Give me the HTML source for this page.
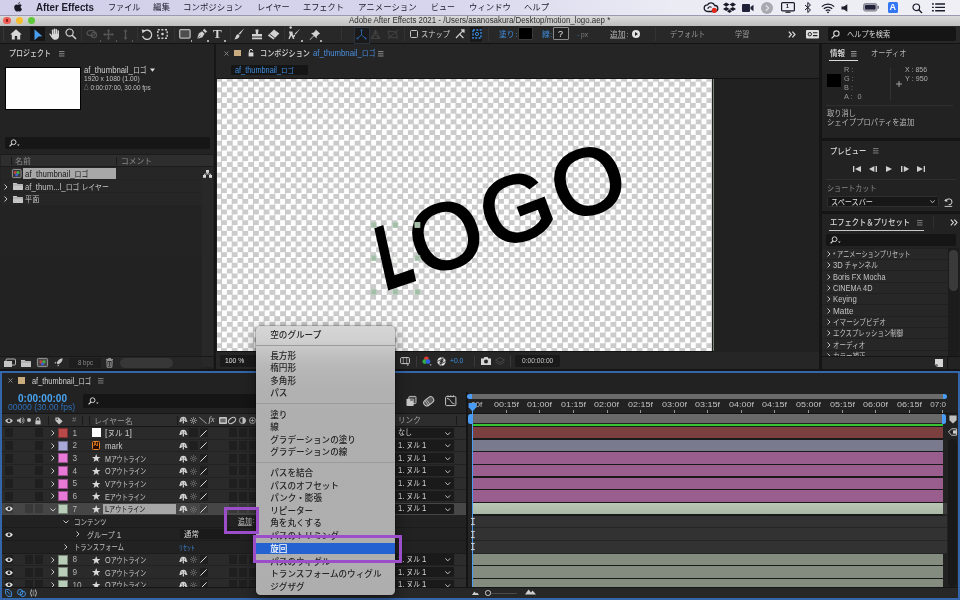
<!DOCTYPE html>
<html lang="ja"><head><meta charset="utf-8"><title>Adobe After Effects 2021 - motion_logo.aep</title>
<style>
html,body{margin:0;padding:0}
body{width:960px;height:600px;overflow:hidden;background:#232323;font-family:"Liberation Sans","Noto Sans CJK JP",sans-serif;color:#c8c8c8;font-size:8px;position:relative}
.a{position:absolute}
.t{position:absolute;white-space:nowrap;overflow:visible}
svg{overflow:visible}
</style></head><body><div id="app" style="position:absolute;left:0;top:0;width:960px;height:600px;overflow:hidden;will-change:transform;opacity:0.9999">

<div class="a" style="left:0;top:0;width:960px;height:15px;background:linear-gradient(90deg,#d2d0ea 0%,#d8d6ee 45%,#ececf5 70%,#f0f0f6 100%)"></div>
<svg class="a" style="left:13px;top:2px;" width="10" height="11" viewBox="0 0 10 11"><path d="M6.9 0.1c0.1 0.9-0.6 1.9-1.6 2.0c-0.1-0.9 0.7-1.9 1.6-2.0zM5.2 2.6c0.5 0 1.0-0.4 1.7-0.4c0.7 0 1.4 0.4 1.8 1.0c-1.6 0.9-1.3 3.2 0.3 3.8c-0.3 0.9-1.2 2.6-2.1 2.6c-0.6 0-0.9-0.4-1.6-0.4c-0.7 0-1.0 0.4-1.6 0.4c-1.0 0-2.5-2.3-2.5-4.2c0-1.9 1.2-2.9 2.4-2.9c0.7 0 1.2 0.4 1.6 0.4z" fill="#1a1a28"/></svg>
<div class="t" style="left:36px;top:2.00px;font-size:10px;height:11px;line-height:11px;color:#1c1c2a;font-weight:bold;transform:scaleX(0.975);transform-origin:0 50%">After Effects</div>
<div class="t" style="left:107.5px;top:3.35px;font-size:8.5px;height:9.5px;line-height:9.5px;color:#1c1c2a;;transform:scaleX(0.955);transform-origin:0 50%">ファイル</div>
<div class="t" style="left:153px;top:3.35px;font-size:8.5px;height:9.5px;line-height:9.5px;color:#1c1c2a;;transform:scaleX(0.999);transform-origin:0 50%">編集</div>
<div class="t" style="left:183.3px;top:3.35px;font-size:8.5px;height:9.5px;line-height:9.5px;color:#1c1c2a;;transform:scaleX(0.995);transform-origin:0 50%">コンポジション</div>
<div class="t" style="left:256.7px;top:3.35px;font-size:8.5px;height:9.5px;line-height:9.5px;color:#1c1c2a;;transform:scaleX(0.966);transform-origin:0 50%">レイヤー</div>
<div class="t" style="left:302.5px;top:3.35px;font-size:8.5px;height:9.5px;line-height:9.5px;color:#1c1c2a;;transform:scaleX(0.960);transform-origin:0 50%">エフェクト</div>
<div class="t" style="left:358px;top:3.35px;font-size:8.5px;height:9.5px;line-height:9.5px;color:#1c1c2a;;transform:scaleX(0.992);transform-origin:0 50%">アニメーション</div>
<div class="t" style="left:430.8px;top:3.35px;font-size:8.5px;height:9.5px;line-height:9.5px;color:#1c1c2a;;transform:scaleX(0.937);transform-origin:0 50%">ビュー</div>
<div class="t" style="left:469px;top:3.35px;font-size:8.5px;height:9.5px;line-height:9.5px;color:#1c1c2a;;transform:scaleX(0.988);transform-origin:0 50%">ウィンドウ</div>
<div class="t" style="left:523.7px;top:3.35px;font-size:8.5px;height:9.5px;line-height:9.5px;color:#1c1c2a;;transform:scaleX(0.980);transform-origin:0 50%">ヘルプ</div>
<svg class="a" style="left:703px;top:2px;" width="16" height="11" viewBox="0 0 16 11"><path d="M4.5 9.5a3.3 3.3 0 0 1 0-6.6a4 4 0 0 1 7.2 0.6a3 3 0 0 1 0.3 6z" fill="none" stroke="#1c1c2a" stroke-width="1.3"/><path d="M5 7a2 2 0 0 1 3.5-1.5" fill="none" stroke="#1c1c2a" stroke-width="1.1"/><circle cx="11.3" cy="8.3" r="2.6" fill="#e02a1c"/></svg>
<svg class="a" style="left:723px;top:2px;" width="13" height="11" viewBox="0 0 13 11"><path d="M3.2 0.5L6.5 2.6L3.2 4.7L0 2.6zM9.8 0.5L13 2.6L9.8 4.7L6.5 2.6zM3.2 4.9L6.5 7L3.2 9.1L0 7zM9.8 4.9L13 7L9.8 9.1L6.5 7zM6.5 7.6L9 9.3L6.5 11L4 9.3z" fill="#1c1c2a"/></svg>
<svg class="a" style="left:742px;top:3.5px;" width="12" height="8" viewBox="0 0 12 8"><rect x="0" y="0" width="8" height="8" rx="1" fill="#22223a"/><path d="M8.5 3L11.5 0.8V7.2L8.5 5z" fill="#22223a"/></svg>
<svg class="a" style="left:761px;top:1.5px;" width="12" height="12" viewBox="0 0 12 12"><circle cx="6" cy="6" r="6" fill="#a9a9b1"/><path d="M4.8 3.2L7.6 6L4.8 8.8" fill="none" stroke="#dcdce2" stroke-width="1.5"/></svg>
<svg class="a" style="left:781px;top:2px;" width="14" height="11" viewBox="0 0 14 11"><rect x="0.6" y="0.6" width="12.8" height="8.3" rx="1" fill="none" stroke="#1c1c2a" stroke-width="1.2"/><rect x="4.5" y="9.6" width="5" height="1.2" fill="#1c1c2a"/></svg>
<div class="t" style="left:785.8px;top:3.30px;font-size:6px;height:7px;line-height:7px;color:#1c1c2a;font-weight:bold;">1</div>
<svg class="a" style="left:804px;top:2px;" width="8" height="11" viewBox="0 0 8 11"><path d="M1 3L6.5 8L3.8 10.5V0.5L6.5 3L1 8" fill="none" stroke="#1c1c2a" stroke-width="1"/></svg>
<svg class="a" style="left:821px;top:2.5px;" width="14" height="10" viewBox="0 0 14 10"><path d="M0.8 3.6a9 9 0 0 1 12.4 0M2.8 5.8a6 6 0 0 1 8.4 0M4.8 7.9a3.2 3.2 0 0 1 4.4 0" fill="none" stroke="#1c1c2a" stroke-width="1.3"/><circle cx="7" cy="9.3" r="0.9" fill="#1c1c2a"/></svg>
<svg class="a" style="left:841px;top:3.5px;" width="8" height="8" viewBox="0 0 8 8"><path d="M0.5 2.6H3L6.3 0.2V7.8L3 5.4H0.5z" fill="#1c1c2a"/></svg>
<svg class="a" style="left:863px;top:3.2px;" width="16" height="8.6" viewBox="0 0 16 8.6"><rect x="0.5" y="0.5" width="13.5" height="7.6" rx="2" fill="#a0a0ac" stroke="#8a8a98" stroke-width="1"/><rect x="2" y="2" width="10.5" height="4.6" rx="1" fill="#22223a"/><rect x="14.6" y="2.8" width="1.3" height="3" rx="0.6" fill="#6a6a78"/></svg>
<div class="a" style="left:887.5px;top:2px;width:10.5px;height:10.5px;background:#3478f6;border-radius:1.5px"></div>
<div class="t" style="left:889.6px;top:2.30px;font-size:9px;height:10px;line-height:10px;color:#ffffff;font-weight:bold;">A</div>
<svg class="a" style="left:912px;top:2.5px;" width="11" height="11" viewBox="0 0 11 11"><circle cx="4.3" cy="4.3" r="3.3" fill="none" stroke="#1c1c2a" stroke-width="1.2"/><path d="M6.8 6.8L10 10" stroke="#1c1c2a" stroke-width="1.4"/></svg>
<svg class="a" style="left:932px;top:3.2px;" width="13" height="9" viewBox="0 0 13 9"><path d="M3.2 1H13M3.2 4.4H13M3.2 7.8H13" stroke="#1c1c2a" stroke-width="1.4"/><path d="M0 1H1.8M0 4.4H1.8M0 7.8H1.8" stroke="#1c1c2a" stroke-width="1.4"/></svg>
<div class="a" style="left:0;top:14.7px;width:960px;height:11px;background:linear-gradient(180deg,#dcdcdc,#bdbdbd);border-top:0.7px solid #9c9ab0"></div>
<div class="a" style="left:3.3000000000000003px;top:16.7px;width:7.8px;height:7.8px;background:#ee5f57;border-radius:50%"></div>
<div class="a" style="left:15.499999999999998px;top:16.7px;width:7.8px;height:7.8px;background:#f5bd30;border-radius:50%"></div>
<div class="a" style="left:27.6px;top:16.7px;width:7.8px;height:7.8px;background:#5fc93c;border-radius:50%"></div>
<div class="a" style="left:6.1px;top:19.4px;width:2.2px;height:2.2px;background:#8c1a10;border-radius:50%"></div>
<div class="t" style="left:348.7px;top:16.05px;font-size:8.3px;height:9.3px;line-height:9.3px;color:#2e2e2e;;transform:scaleX(0.951);transform-origin:0 50%">Adobe After Effects 2021 - /Users/asanosakura/Desktop/motion_logo.aep *</div>
<div class="a" style="left:0px;top:25.5px;width:960px;height:17.5px;background:#292929;"></div>
<div class="a" style="left:0px;top:43px;width:960px;height:1.3px;background:#141414;"></div>
<div class="a" style="left:0;top:-1px;width:960px;height:60px">
<div class="a" style="left:3px;top:28px;width:1px;height:14px;background:#3a3a3a;"></div>
<svg class="a" style="left:10px;top:29.5px;" width="12" height="11" viewBox="0 0 12 11"><path d="M6 0.3L0.2 5.4H1.8V10.6H4.8V7H7.2V10.6H10.2V5.4H11.8z" fill="#d8d8d8"/></svg>
<div class="a" style="left:30px;top:28.2px;width:14.5px;height:13.6px;background:#161616;"></div>
<svg class="a" style="left:33.5px;top:29.6px;" width="9" height="12" viewBox="0 0 9 12"><path d="M0.5 0.3L8.3 7.2L4.6 7.4L0.5 11.2z" fill="#4a9ff0"/></svg>
<svg class="a" style="left:48.5px;top:29px;" width="12" height="12" viewBox="0 0 12 12"><g fill="#d8d8d8"><rect x="2.9" y="1.6" width="1.55" height="6" rx="0.75"/><rect x="4.75" y="0.5" width="1.55" height="7" rx="0.75"/><rect x="6.6" y="1" width="1.55" height="6.5" rx="0.75"/><rect x="8.45" y="2.3" width="1.5" height="6" rx="0.75"/><path d="M2.9 5.8H9.95V8.2C9.95 10.4 8.6 11.8 6.4 11.8C4.6 11.8 3.7 11 2.6 9.4L0.5 6.6C0 5.8 1.1 5.1 1.7 5.9L2.9 7.4z"/></g></svg>
<svg class="a" style="left:65px;top:29px;" width="12" height="12" viewBox="0 0 12 12"><circle cx="4.6" cy="4.6" r="3.6" fill="none" stroke="#d2d2d2" stroke-width="1.2"/><path d="M7.2 7.2L11 11" stroke="#d2d2d2" stroke-width="1.6"/></svg>
<div class="a" style="left:80.5px;top:28px;width:0.7px;height:14px;background:#343434;"></div>
<svg class="a" style="left:86px;top:30px;" width="13" height="10" viewBox="0 0 13 10"><ellipse cx="5" cy="4" rx="4" ry="2.6" fill="none" stroke="#555" stroke-width="1.2"/><circle cx="8" cy="6" r="2.6" fill="none" stroke="#555" stroke-width="1.2"/></svg>
<svg class="a" style="left:103px;top:29.5px;" width="11" height="11" viewBox="0 0 11 11"><path d="M5.5 0L7.3 2.2H6.2V4.8H8.8V3.7L11 5.5L8.8 7.3V6.2H6.2V8.8H7.3L5.5 11L3.7 8.8H4.8V6.2H2.2V7.3L0 5.5L2.2 3.7V4.8H4.8V2.2H3.7z" fill="#555"/></svg>
<svg class="a" style="left:121.5px;top:29.5px;" width="7" height="11" viewBox="0 0 7 11"><path d="M3.5 0L5.6 2.6H4.2V8.4H5.6L3.5 11L1.4 8.4H2.8V2.6H1.4z" fill="#555"/></svg>
<div class="a" style="left:99.5px;top:41px;width:1.5px;height:1.5px;background:#555;"></div>
<div class="a" style="left:115.5px;top:41px;width:1.5px;height:1.5px;background:#555;"></div>
<div class="a" style="left:131.5px;top:41px;width:1.5px;height:1.5px;background:#555;"></div>
<div class="a" style="left:136.5px;top:28px;width:0.7px;height:14px;background:#343434;"></div>
<svg class="a" style="left:141px;top:29.5px;" width="12" height="11" viewBox="0 0 12 11"><path d="M3.2 2.2A4.6 4.6 0 1 1 1.6 6.8" fill="none" stroke="#d2d2d2" stroke-width="1.3"/><path d="M0.6 0.4L4.8 1.2L1.6 4.4z" fill="#d2d2d2"/></svg>
<svg class="a" style="left:157px;top:30px;" width="11" height="10" viewBox="0 0 11 10"><rect x="0.8" y="0.8" width="9.4" height="8.4" fill="none" stroke="#d2d2d2" stroke-width="1.4" stroke-dasharray="2 1.6"/><circle cx="5.5" cy="5" r="1.3" fill="#d2d2d2"/></svg>
<div class="a" style="left:173.5px;top:28px;width:0.7px;height:14px;background:#343434;"></div>
<svg class="a" style="left:179px;top:29.5px;" width="12" height="10" viewBox="0 0 12 10"><rect x="0.7" y="0.7" width="10.4" height="8.4" rx="1" fill="#4e4e4e" stroke="#b8b8b8" stroke-width="1.3"/></svg>
<div class="a" style="left:190.5px;top:41px;width:1.5px;height:1.5px;background:#aaa;"></div>
<svg class="a" style="left:196px;top:29px;" width="12" height="12" viewBox="0 0 12 12"><path d="M8.2 0.4L11.4 3.6L9.4 5.2L6.6 2.4zM6 3L8.8 5.8L6.4 9.6L1 11L2.4 5.6zM2.2 9.8L4.6 7.4" fill="#d2d2d2" stroke="#292929" stroke-width="0.5"/></svg>
<div class="a" style="left:207px;top:41px;width:1.5px;height:1.5px;background:#aaa;"></div>
<div class="t" style="left:213px;top:28.20px;font-size:13px;height:14px;line-height:14px;color:#d8d8d8;font-family:&quot;Liberation Serif&quot;,serif;font-weight:bold;">T</div>
<div class="a" style="left:224px;top:41px;width:1.5px;height:1.5px;background:#aaa;"></div>
<div class="a" style="left:229.5px;top:28px;width:0.7px;height:14px;background:#343434;"></div>
<svg class="a" style="left:234px;top:29px;" width="11" height="12" viewBox="0 0 11 12"><path d="M10.4 0.3L6 6.6L4.6 5.4zM4 6L5.6 7.4C5.4 9.6 3.6 11 0.4 11.4C1.8 10 1.6 7 4 6z" fill="#d2d2d2"/></svg>
<svg class="a" style="left:250.5px;top:29.5px;" width="12" height="11" viewBox="0 0 12 11"><path d="M4.4 0.4H7.6L7 5H11V7.6H1V5H5zM1 8.6H11V10.2H1z" fill="#d2d2d2"/></svg>
<svg class="a" style="left:266.5px;top:29.5px;" width="13" height="11" viewBox="0 0 13 11"><path d="M7 0.4L12.4 4.4L6.4 10.6L0.8 6.4z" fill="#d2d2d2"/><path d="M2.6 5L7.8 9" stroke="#292929" stroke-width="0.9"/></svg>
<div class="a" style="left:284px;top:28px;width:0.7px;height:14px;background:#343434;"></div>
<svg class="a" style="left:288px;top:29px;" width="13" height="12" viewBox="0 0 13 12"><path d="M2.6 0.8a1.3 1.3 0 1 1 0.1 0zM1 3.6H4.4L5 7L6.4 11H5L3.4 7.6L1.6 11H0.4L1.8 7zM12.4 0.6L7.6 6.6L6.6 5.8zM6.2 6.4L7.2 7.2C7 8.6 6 9.4 4.6 9.6C5.4 8.8 5.2 7 6.2 6.4z" fill="#d2d2d2"/></svg>
<div class="a" style="left:301px;top:41px;width:1.5px;height:1.5px;background:#aaa;"></div>
<svg class="a" style="left:308.5px;top:29.5px;" width="12" height="12" viewBox="0 0 12 12"><path d="M6.8 0.4L11.2 4.8L9.8 5.2L7.8 7.2L7.6 9.6L5 7L1 11L0.6 10.6L4.6 6.6L2 4L4.4 3.8L6.4 1.8z" fill="#d2d2d2"/></svg>
<div class="a" style="left:320px;top:41px;width:1.5px;height:1.5px;background:#aaa;"></div>
<div class="a" style="left:340.5px;top:28px;width:0.7px;height:14px;background:#343434;"></div>
<div class="a" style="left:354px;top:27.5px;width:14px;height:15px;background:#1b1b1b;border:0.6px solid #2a3340"></div>
<svg class="a" style="left:355.5px;top:29.5px;" width="11" height="11" viewBox="0 0 11 11"><path d="M5.5 1.2V6L1.4 9.4M5.5 6L9.6 9.4" fill="none" stroke="#2b62a6" stroke-width="1"/><circle cx="5.5" cy="1.2" r="1" fill="#2b62a6"/><circle cx="1.4" cy="9.4" r="1" fill="#2b62a6"/><circle cx="9.6" cy="9.4" r="1" fill="#2b62a6"/></svg>
<svg class="a" style="left:370px;top:29.5px;" width="11" height="11" viewBox="0 0 11 11"><path d="M5.5 1.2L1.4 9.4H9.6zM5.5 1.2V6L1.4 9.4M5.5 6L9.6 9.4" fill="none" stroke="#474747" stroke-width="0.9"/></svg>
<svg class="a" style="left:386.5px;top:29.5px;" width="12" height="11" viewBox="0 0 12 11"><path d="M1 2L9 3L10.4 9L2.4 8zM1 9.6L11 1" fill="none" stroke="#474747" stroke-width="0.9"/></svg>
<div class="a" style="left:404px;top:28px;width:0.7px;height:14px;background:#343434;"></div>
<div class="a" style="left:409.5px;top:30.5px;width:8.5px;height:8.5px;background:transparent;border:1.2px solid #c4c4c4;border-radius:1.5px;box-sizing:border-box"></div>
<div class="t" style="left:420.8px;top:31.10px;font-size:8px;height:9px;line-height:9px;color:#d0d0d0;;transform:scaleX(0.903);transform-origin:0 50%">スナップ</div>
<svg class="a" style="left:455px;top:30px;" width="10" height="10" viewBox="0 0 10 10"><path d="M1 9L4.6 5.2L8.4 9M4.6 5.2L9 0.8M6 0.8H9V3.8" fill="none" stroke="#d2d2d2" stroke-width="1.2"/></svg>
<div class="a" style="left:470px;top:27.5px;width:12px;height:15px;background:#1b1b1b;"></div>
<svg class="a" style="left:471.5px;top:30px;" width="10" height="10" viewBox="0 0 10 10"><rect x="1" y="1" width="8" height="8" fill="none" stroke="#3b8be0" stroke-width="1.5" stroke-dasharray="2 1.3"/><circle cx="5" cy="5" r="1.6" fill="none" stroke="#3b8be0" stroke-width="1"/></svg>
<div class="a" style="left:488px;top:28px;width:0.7px;height:14px;background:#343434;"></div>
<div class="t" style="left:499px;top:31.10px;font-size:8px;height:9px;line-height:9px;color:#3f8fe0;;transform:scaleX(0.969);transform-origin:0 50%">塗り</div>
<div class="t" style="left:515.5px;top:30.50px;font-size:8px;height:9px;line-height:9px;color:#3f8fe0;;">:</div>
<div class="a" style="left:517.5px;top:28.2px;width:15.5px;height:13px;background:#000;border:0.8px solid #3c3c3c;box-sizing:border-box;border-radius:1px"></div>
<div class="t" style="left:541.5px;top:31.10px;font-size:8px;height:9px;line-height:9px;color:#3f8fe0;;transform:scaleX(0.975);transform-origin:0 50%">線</div>
<div class="t" style="left:550px;top:30.50px;font-size:8px;height:9px;line-height:9px;color:#3f8fe0;;">:</div>
<div class="a" style="left:552.5px;top:28.2px;width:16px;height:13px;background:#202020;border:1.2px solid #8a8a8a;box-sizing:border-box;border-radius:1px"></div>
<div class="t" style="left:558px;top:30.00px;font-size:9px;height:10px;line-height:10px;color:#e8e8e8;;">?</div>
<div class="t" style="left:577px;top:30.80px;font-size:8px;height:9px;line-height:9px;color:#808080;;transform:scaleX(0.824);transform-origin:0 50%"><span style="color:#3f7fc8">-</span> px</div>
<div class="t" style="left:610px;top:31.10px;font-size:8px;height:9px;line-height:9px;color:#b4b4b4;text-decoration:underline;text-decoration-color:#6a6a6a;text-decoration-thickness:0.6px;transform:scaleX(0.969);transform-origin:0 50%">追加</div>
<div class="t" style="left:626.5px;top:30.50px;font-size:8px;height:9px;line-height:9px;color:#b8b8b8;;">:</div>
<svg class="a" style="left:632px;top:31px;" width="8" height="8" viewBox="0 0 8 8"><circle cx="4" cy="4" r="4" fill="#e4e4e4"/><path d="M3 2L6 4L3 6z" fill="#222"/></svg>
<div class="a" style="left:654.5px;top:28px;width:0.7px;height:14px;background:#343434;"></div>
<div class="t" style="left:669.7px;top:31.30px;font-size:8px;height:9px;line-height:9px;color:#9a9a9a;;transform:scaleX(0.882);transform-origin:0 50%">デフォルト</div>
<div class="t" style="left:735px;top:31.30px;font-size:8px;height:9px;line-height:9px;color:#9a9a9a;;transform:scaleX(0.894);transform-origin:0 50%">学習</div>
<svg class="a" style="left:788px;top:31.5px;" width="8" height="7" viewBox="0 0 8 7"><path d="M0.8 0.6L3.4 3.5L0.8 6.4M4.4 0.6L7 3.5L4.4 6.4" fill="none" stroke="#e0e0e0" stroke-width="1.2"/></svg>
<svg class="a" style="left:806px;top:31px;" width="13" height="8.5" viewBox="0 0 13 8.5"><rect x="0" y="0" width="13" height="8.5" rx="1" fill="#e0e0e0"/><circle cx="3.8" cy="4.2" r="1.7" fill="none" stroke="#222" stroke-width="1"/><path d="M7 2.8H11.4M7 5.6H11.4" stroke="#222" stroke-width="1.1"/></svg>
<div class="a" style="left:827.5px;top:28.2px;width:128px;height:14px;background:#161616;border-radius:2px"></div>
<svg class="a" style="left:831px;top:30.5px;" width="9" height="9" viewBox="0 0 9 9"><circle cx="5.4" cy="3.6" r="2.7" fill="none" stroke="#d2d2d2" stroke-width="1.1"/><path d="M3.4 5.6L0.6 8.4" stroke="#d2d2d2" stroke-width="1.3"/></svg>
<div class="t" style="left:846.7px;top:31.30px;font-size:8px;height:9px;line-height:9px;color:#d8d8d8;;transform:scaleX(0.902);transform-origin:0 50%">ヘルプを検索</div>
</div>
<div class="a" style="left:0px;top:44.3px;width:960px;height:327px;background:#232323;"></div>
<div class="a" style="left:213.8px;top:44px;width:2.5px;height:325px;background:#161616;"></div>
<div class="a" style="left:819.3px;top:44px;width:2.8px;height:325px;background:#161616;"></div>
<div class="a" style="left:822px;top:138px;width:138px;height:2.8px;background:#161616;"></div>
<div class="a" style="left:822px;top:211px;width:138px;height:2.8px;background:#161616;"></div>
<div class="a" style="left:0px;top:368.6px;width:960px;height:3px;background:#161616;"></div>
<div class="t" style="left:9px;top:48.85px;font-size:8.5px;height:9.5px;line-height:9.5px;color:#d4d4d4;font-weight:500;transform:scaleX(0.823);transform-origin:0 50%">プロジェクト</div>
<svg class="a" style="left:59px;top:50.5px;" width="5.5" height="5.6" viewBox="0 0 5.5 5.6"><path d="M0 0.6H5.5M0 2.8H5.5M0 5H5.5" stroke="#9a9a9a" stroke-width="0.9"/></svg>
<div class="a" style="left:4.6px;top:66.8px;width:76px;height:43.2px;background:#ffffff;border:0.8px solid #000;box-sizing:border-box"></div>
<div class="t" style="left:84px;top:66.10px;font-size:8px;height:9px;line-height:9px;color:#d0d0d0;;transform:scaleX(0.862);transform-origin:0 50%"><span style="font-size:1.13em;line-height:1px">af_thumbnail_</span>ロゴ</div>
<svg class="a" style="left:149.5px;top:68px;" width="5" height="4" viewBox="0 0 5 4"><path d="M0 0.4H5L2.5 3.8z" fill="#e0e0e0"/></svg>
<div class="t" style="left:84px;top:74.85px;font-size:7.3px;height:8.3px;line-height:8.3px;color:#c0c0c0;;transform:scaleX(0.909);transform-origin:0 50%">1920 x 1080 (1.00)</div>
<div class="t" style="left:84px;top:83.85px;font-size:7.3px;height:8.3px;line-height:8.3px;color:#c0c0c0;;transform:scaleX(0.881);transform-origin:0 50%"><span style="font-size:0.72em;position:relative;top:-0.5px">△</span> 0:00:07:00, 30.00 fps</div>
<div class="a" style="left:5px;top:137.3px;width:204.5px;height:11.7px;background:#161616;border-radius:2px"></div>
<svg class="a" style="left:8.5px;top:139.3px;" width="11" height="8" viewBox="0 0 11 8"><circle cx="4.6" cy="3.2" r="2.4" fill="none" stroke="#d2d2d2" stroke-width="1"/><path d="M2.9 5L0.6 7.4" stroke="#d2d2d2" stroke-width="1.2"/><path d="M8 5.4H10.6L9.3 7z" fill="#d2d2d2"/></svg>
<div class="a" style="left:0px;top:154.3px;width:213.3px;height:1px;background:#1b1b1b;"></div>
<div class="a" style="left:1px;top:155.3px;width:212.3px;height:11px;background:#2f2f2f;"></div>
<div class="a" style="left:0px;top:166.3px;width:213.3px;height:1px;background:#1b1b1b;"></div>
<div class="a" style="left:10.5px;top:157px;width:0.9px;height:8px;background:#1a1a1a;"></div>
<div class="a" style="left:116px;top:157px;width:0.9px;height:8px;background:#1a1a1a;"></div>
<div class="t" style="left:15px;top:157.10px;font-size:8px;height:9px;line-height:9px;color:#8c8c8c;;transform:scaleX(1.000);transform-origin:0 50%">名前</div>
<div class="t" style="left:121px;top:157.10px;font-size:8px;height:9px;line-height:9px;color:#8c8c8c;;transform:scaleX(0.969);transform-origin:0 50%">コメント</div>
<div class="a" style="left:1px;top:167.3px;width:200.5px;height:11.9px;background:#272727;"></div>
<div class="a" style="left:1px;top:179.967px;width:200.5px;height:11.9px;background:#272727;"></div>
<div class="a" style="left:1px;top:192.63400000000001px;width:200.5px;height:11.9px;background:#272727;"></div>
<div class="a" style="left:201.5px;top:167.3px;width:11.8px;height:200px;background:#292929;"></div>
<svg class="a" style="left:12px;top:168.8px;" width="9.5" height="9" viewBox="0 0 9.5 9"><rect x="0.4" y="0.4" width="8.7" height="8.2" rx="1" fill="#3a3a3a" stroke="#b0b0b0" stroke-width="0.8"/><circle cx="3.4" cy="3.6" r="1.6" fill="#d04040"/><circle cx="6" cy="3.6" r="1.6" fill="#40b040"/><circle cx="4.7" cy="5.8" r="1.6" fill="#4060d0"/></svg>
<div class="a" style="left:23.3px;top:167.6px;width:92.7px;height:11.6px;background:#a9a9a9;"></div>
<div class="t" style="left:24.5px;top:169.70px;font-size:8px;height:9px;line-height:9px;color:#1a1a1a;;transform:scaleX(0.873);transform-origin:0 50%"><span style="font-size:1.13em;line-height:1px">af_thumbnail_</span>ロゴ</div>
<svg class="a" style="left:203px;top:169.5px;" width="9" height="8" viewBox="0 0 9 8"><rect x="3" y="0" width="3" height="2.8" fill="#d8d8d8"/><rect x="0" y="5" width="3" height="2.8" fill="#d8d8d8"/><rect x="6" y="5" width="3" height="2.8" fill="#d8d8d8"/><path d="M4.5 2.8V4H1.5V5M4.5 4H7.5V5" fill="none" stroke="#d8d8d8" stroke-width="0.8"/></svg>
<svg class="a" style="left:3.5px;top:183.5px;" width="4" height="6" viewBox="0 0 4 6"><path d="M0.5 0.5L3 3L0.5 5.5" fill="none" stroke="#c8c8c8" stroke-width="1"/></svg>
<svg class="a" style="left:12.5px;top:182.3px;" width="10" height="8" viewBox="0 0 10 8"><path d="M0 1H3.6L4.6 2H10V8H0z" fill="#c6c6c6"/><path d="M0 3H10" stroke="#8a8a8a" stroke-width="0.6"/></svg>
<div class="t" style="left:24.5px;top:182.70px;font-size:8px;height:9px;line-height:9px;color:#c4c4c4;;transform:scaleX(0.862);transform-origin:0 50%"><span style="font-size:1.13em;line-height:1px">af_thum...l_</span>ロゴ レイヤー</div>
<svg class="a" style="left:3.5px;top:196.2px;" width="4" height="6" viewBox="0 0 4 6"><path d="M0.5 0.5L3 3L0.5 5.5" fill="none" stroke="#c8c8c8" stroke-width="1"/></svg>
<svg class="a" style="left:12.5px;top:195px;" width="10" height="8" viewBox="0 0 10 8"><path d="M0 1H3.6L4.6 2H10V8H0z" fill="#c6c6c6"/><path d="M0 3H10" stroke="#8a8a8a" stroke-width="0.6"/></svg>
<div class="t" style="left:24.5px;top:195.40px;font-size:8px;height:9px;line-height:9px;color:#c4c4c4;;transform:scaleX(0.894);transform-origin:0 50%">平面</div>
<div class="a" style="left:0px;top:355.8px;width:213.8px;height:1.2px;background:#191919;"></div>
<div class="a" style="left:0px;top:357px;width:201.5px;height:11.6px;background:#272727;"></div>
<svg class="a" style="left:3.5px;top:358.5px;" width="12" height="8" viewBox="0 0 12 8"><rect x="0" y="2" width="8" height="6" fill="#c6c6c6"/><rect x="2" y="0" width="9.5" height="6" rx="1" fill="none" stroke="#c6c6c6" stroke-width="0.9"/></svg>
<svg class="a" style="left:21px;top:358.5px;" width="10" height="8" viewBox="0 0 10 8"><path d="M0 1H3.6L4.6 2H10V8H0z" fill="#c6c6c6"/><path d="M0 3H10" stroke="#8a8a8a" stroke-width="0.6"/></svg>
<svg class="a" style="left:37px;top:358px;" width="11" height="9" viewBox="0 0 11 9"><rect x="0.4" y="0.4" width="10.2" height="8.2" rx="1" fill="#4a4a4a" stroke="#b0b0b0" stroke-width="0.8"/><circle cx="4" cy="3.8" r="1.6" fill="#d04040"/><circle cx="7" cy="3.8" r="1.6" fill="#40b040"/><circle cx="5.5" cy="6" r="1.6" fill="#4060d0"/></svg>
<svg class="a" style="left:54px;top:358px;" width="9" height="9" viewBox="0 0 9 9"><path d="M8.6 0.2C5.6 0.4 3.6 2.4 2.6 5L4 6.4C6.6 5.4 8.6 3.4 8.6 0.2zM2 5.4L0.4 5.2L1.8 3.6zM3.6 7L3.8 8.6L5.4 7.2zM0.4 8.6L2.2 6.8" fill="#c6c6c6"/></svg>
<div class="a" style="left:69px;top:357.5px;width:32px;height:10.5px;background:#1f1f1f;border-radius:1px"></div>
<div class="t" style="left:77.5px;top:358.85px;font-size:7.3px;height:8.3px;line-height:8.3px;color:#8a8a8a;;transform:scaleX(0.840);transform-origin:0 50%">8 bpc</div>
<svg class="a" style="left:106px;top:357.5px;" width="7" height="9.5" viewBox="0 0 7 9.5"><path d="M0 1.6H7M2.4 1.6V0.4H4.6V1.6M0.8 2.6H6.2L5.8 9.2H1.2z" fill="none" stroke="#a8a8a8" stroke-width="0.9"/><path d="M2.6 4V8M4.4 4V8" stroke="#a8a8a8" stroke-width="0.7"/></svg>
<div class="a" style="left:119.5px;top:357.5px;width:53px;height:10px;background:#383838;border-radius:5px"></div>
<div class="a" style="left:216.3px;top:44.3px;width:603px;height:33.3px;background:#262626;"></div>
<div class="a" style="left:216.3px;top:79px;width:603px;height:273px;background:#222222;"></div>
<svg class="a" style="left:223.5px;top:51px;" width="5" height="5" viewBox="0 0 5 5"><path d="M0.5 0.5L4.5 4.5M4.5 0.5L0.5 4.5" stroke="#9a9a9a" stroke-width="0.8"/></svg>
<div class="a" style="left:234.3px;top:49.5px;width:6.8px;height:6.8px;background:#c9ad80;"></div>
<svg class="a" style="left:248px;top:48.5px;" width="6" height="8" viewBox="0 0 6 8"><path d="M1.4 3.4V2a1.6 1.6 0 0 1 3.2 0" fill="none" stroke="#d8d8d8" stroke-width="1"/><rect x="0.6" y="3.4" width="4.8" height="4" fill="#d8d8d8"/></svg>
<div class="t" style="left:259.7px;top:48.85px;font-size:8.5px;height:9.5px;line-height:9.5px;color:#d8d8d8;font-weight:500;transform:scaleX(0.840);transform-origin:0 50%">コンポジション</div>
<div class="t" style="left:312.5px;top:49.60px;font-size:7.6px;height:8.6px;line-height:8.6px;color:#4a90e0;;transform:scaleX(0.905);transform-origin:0 50%"><span style="font-size:1.13em;line-height:1px">af_thumbnail_</span>ロゴ</div>
<svg class="a" style="left:378px;top:50.5px;" width="5.5" height="5.6" viewBox="0 0 5.5 5.6"><path d="M0 0.6H5.5M0 2.8H5.5M0 5H5.5" stroke="#9a9a9a" stroke-width="0.9"/></svg>
<div class="a" style="left:230.5px;top:65px;width:77.5px;height:10px;background:#161616;border-radius:1px"></div>
<div class="t" style="left:235px;top:66.60px;font-size:7.4px;height:8.4px;line-height:8.4px;color:#3f8fe0;;transform:scaleX(0.877);transform-origin:0 50%"><span style="font-size:1.13em;line-height:1px">af_thumbnail_</span>ロゴ</div>
<div class="a" style="left:216.2px;top:77.6px;width:603.1px;height:1.4px;background:#141414;"></div>
<div class="a" style="left:217px;top:79px;width:495.3px;height:271.6px;background-color:#fff;background-image:conic-gradient(#ccc 25%,#fff 0 50%,#ccc 0 75%,#fff 0);background-size:10.6667px 10.6667px;background-position:-0.8px 2.7px"></div>
<div class="a" style="left:713.2px;top:79px;width:1.3px;height:272px;background:#748472;"></div>
<div class="a" style="left:217px;top:350.6px;width:497px;height:1px;background:#141414;"></div>
<svg class="a" style="left:0;top:0" width="960" height="600" viewBox="0 0 960 600"><g font-family="Liberation Sans, sans-serif" font-size="92" fill="#000" stroke="#000" stroke-width="3" text-anchor="middle"><text transform="translate(387.2,290.4) rotate(-19) skewX(-6.5) translate(-1.7,-2.5) scale(0.69,1)" font-size="83.6" stroke-width="5.2" vector-effect="non-scaling-stroke" text-anchor="start">L</text><text transform="translate(446,236) rotate(-20.5)" y="31.6">O</text><text transform="translate(516.6,208.5) rotate(-20.5)" y="31.6">G</text><text transform="translate(587.9,181.7) rotate(-20.5)" y="31.6">O</text></g>
<rect x="371.2" y="222.4" width="5" height="5" fill="#a3bfa7" stroke="#b4cbb8" stroke-width="0.8"/>
<rect x="392.9" y="222.4" width="5" height="5" fill="#a3bfa7" stroke="#b4cbb8" stroke-width="0.8"/>
<rect x="414.9" y="222.4" width="5" height="5" fill="#a3bfa7" stroke="#b4cbb8" stroke-width="0.8"/>
<rect x="371.2" y="255.7" width="5" height="5" fill="#a3bfa7" stroke="#b4cbb8" stroke-width="0.8"/>
<rect x="414.9" y="255.7" width="5" height="5" fill="#a3bfa7" stroke="#b4cbb8" stroke-width="0.8"/>
<rect x="371.2" y="289.4" width="5" height="5" fill="#a3bfa7" stroke="#b4cbb8" stroke-width="0.8"/>
<rect x="392.9" y="289.4" width="5" height="5" fill="#a3bfa7" stroke="#b4cbb8" stroke-width="0.8"/>
<rect x="414.9" y="289.4" width="5" height="5" fill="#a3bfa7" stroke="#b4cbb8" stroke-width="0.8"/>
<g stroke="#dfe8df" stroke-width="0.8" fill="none"><path d="M392.6 258L395 255.4L397.6 258L395 260.6z"/><path d="M390.5 258H392.6M397.6 258H399.5M395 253.5V255.4M395 260.6V262.5"/></g>
</svg>
<div class="a" style="left:216.2px;top:352px;width:603.1px;height:16.6px;background:#272727;"></div>
<div class="a" style="left:220px;top:355.3px;width:36px;height:12.2px;background:#1b1b1b;border-radius:1px"></div>
<div class="t" style="left:224.5px;top:357.35px;font-size:7.3px;height:8.3px;line-height:8.3px;color:#e2e2e2;;transform:scaleX(0.932);transform-origin:0 50%">100 %</div>
<svg class="a" style="left:400px;top:356.7px;" width="10" height="9" viewBox="0 0 10 9"><rect x="0.6" y="0.6" width="8.8" height="6" rx="1" fill="none" stroke="#d0d0d0" stroke-width="1"/><path d="M3.3 0.6V6.6M6.7 0.6V6.6" stroke="#d0d0d0" stroke-width="0.6"/><path d="M6.6 7.6H9L7.8 9z" fill="#d0d0d0"/></svg>
<div class="a" style="left:416px;top:355.5px;width:0.7px;height:11px;background:#3a3a3a;"></div>
<svg class="a" style="left:422px;top:356.2px;" width="10" height="10" viewBox="0 0 10 10"><circle cx="4.4" cy="2.8" r="2.4" fill="#e03a30"/><circle cx="2.8" cy="5.6" r="2.4" fill="#2fb040"/><circle cx="6" cy="5.6" r="2.4" fill="#3060e0"/><path d="M7.4 8.4H9.8L8.6 9.8z" fill="#d0d0d0"/></svg>
<svg class="a" style="left:436.8px;top:357.0px;" width="9" height="9" viewBox="0 0 9 9"><circle cx="4.5" cy="4.5" r="4.2" fill="#e6e6e6"/><path d="M4.5 0.3L6.3 4.2M8.7 4.5L5.2 6.3M4.5 8.7L2.7 4.8M0.3 4.5L3.8 2.7M7.6 1.6L3.8 2.7M1.4 7.4L5.2 6.3" stroke="#272727" stroke-width="0.8" fill="none"/><circle cx="4.5" cy="4.5" r="1.4" fill="#272727"/></svg>
<div class="t" style="left:450px;top:357.25px;font-size:7.3px;height:8.3px;line-height:8.3px;color:#3f8fe0;;transform:scaleX(0.923);transform-origin:0 50%">+0.0</div>
<div class="a" style="left:473.5px;top:355.5px;width:0.7px;height:11px;background:#3a3a3a;"></div>
<svg class="a" style="left:480.5px;top:357.2px;" width="10" height="8" viewBox="0 0 10 8"><path d="M0 1.4H2.6L3.4 0H6.6L7.4 1.4H10V8H0z" fill="#d6d6d6"/><circle cx="5" cy="4.6" r="2" fill="#272727"/></svg>
<svg class="a" style="left:495px;top:356.7px;" width="10" height="9" viewBox="0 0 10 9"><path d="M5 0.5L9.5 3L5 5.5L0.5 3zM0.5 5L5 7.5L9.5 5" fill="none" stroke="#4a4a4a" stroke-width="0.9"/></svg>
<div class="a" style="left:509.5px;top:355.5px;width:0.7px;height:11px;background:#3a3a3a;"></div>
<div class="a" style="left:514.8px;top:355.3px;width:45px;height:12.2px;background:#1b1b1b;border-radius:1px"></div>
<div class="t" style="left:521.7px;top:357.25px;font-size:7.3px;height:8.3px;line-height:8.3px;color:#c8c8c8;;transform:scaleX(0.907);transform-origin:0 50%">0:00:00:00</div>
<div class="t" style="left:830px;top:48.85px;font-size:8.5px;height:9.5px;line-height:9.5px;color:#e0e0e0;font-weight:500;transform:scaleX(0.882);transform-origin:0 50%">情報</div>
<svg class="a" style="left:851px;top:50.7px;" width="5.5" height="5.6" viewBox="0 0 5.5 5.6"><path d="M0 0.6H5.5M0 2.8H5.5M0 5H5.5" stroke="#b0b0b0" stroke-width="0.9"/></svg>
<div class="a" style="left:829px;top:60.2px;width:28.5px;height:1px;background:#dcdcdc;"></div>
<div class="t" style="left:871.3px;top:49.15px;font-size:8.5px;height:9.5px;line-height:9.5px;color:#b4b4b4;;transform:scaleX(0.845);transform-origin:0 50%">オーディオ</div>
<div class="a" style="left:827px;top:74px;width:14px;height:13.2px;background:#000;"></div>
<div class="t" style="left:844px;top:66.35px;font-size:7.3px;height:8.3px;line-height:8.3px;color:#9a9a9a;;">R :</div>
<div class="t" style="left:844px;top:75.15px;font-size:7.3px;height:8.3px;line-height:8.3px;color:#9a9a9a;;">G :</div>
<div class="t" style="left:844px;top:83.85px;font-size:7.3px;height:8.3px;line-height:8.3px;color:#9a9a9a;;">B :</div>
<div class="t" style="left:844px;top:92.85px;font-size:7.3px;height:8.3px;line-height:8.3px;color:#9a9a9a;;">A :</div>
<div class="t" style="left:857.5px;top:92.85px;font-size:7.3px;height:8.3px;line-height:8.3px;color:#9a9a9a;;">0</div>
<div class="a" style="left:890.3px;top:68px;width:0.7px;height:32px;background:#333;"></div>
<svg class="a" style="left:896px;top:80.5px;" width="6" height="6" viewBox="0 0 6 6"><path d="M3 0V6M0 3H6" stroke="#c0c0c0" stroke-width="0.8"/></svg>
<div class="t" style="left:904.7px;top:66.35px;font-size:7.3px;height:8.3px;line-height:8.3px;color:#b0b0b0;;transform:scaleX(0.951);transform-origin:0 50%">X :  856</div>
<div class="t" style="left:905.3px;top:75.05px;font-size:7.3px;height:8.3px;line-height:8.3px;color:#b0b0b0;;transform:scaleX(0.987);transform-origin:0 50%">Y :  950</div>
<div class="a" style="left:826px;top:104.8px;width:127px;height:0.7px;background:#303030;"></div>
<div class="t" style="left:827px;top:108.70px;font-size:8px;height:9px;line-height:9px;color:#b8b8b8;;transform:scaleX(0.900);transform-origin:0 50%">取り消し</div>
<div class="t" style="left:827px;top:118.30px;font-size:8px;height:9px;line-height:9px;color:#b8b8b8;;transform:scaleX(0.913);transform-origin:0 50%">シェイププロパティを追加</div>
<div class="t" style="left:830px;top:146.65px;font-size:8.5px;height:9.5px;line-height:9.5px;color:#d8d8d8;font-weight:500;transform:scaleX(0.854);transform-origin:0 50%">プレビュー</div>
<svg class="a" style="left:873px;top:148.2px;" width="5.5" height="5.6" viewBox="0 0 5.5 5.6"><path d="M0 0.6H5.5M0 2.8H5.5M0 5H5.5" stroke="#8a8a8a" stroke-width="0.9"/></svg>
<svg class="a" style="left:853px;top:166px;" width="8" height="6" viewBox="0 0 8 6"><rect x="0" y="0" width="1.3" height="6" fill="#d0d0d0"/><path d="M8 0V6L2 3z" fill="#d0d0d0"/></svg>
<svg class="a" style="left:868.5px;top:166px;" width="9" height="6" viewBox="0 0 9 6"><path d="M5.4 0V6L0 3z" fill="#d0d0d0"/><rect x="6.6" y="0" width="1.4" height="6" fill="#d0d0d0"/></svg>
<svg class="a" style="left:886px;top:166px;" width="6" height="6" viewBox="0 0 6 6"><path d="M0 0V6L6 3z" fill="#d0d0d0"/></svg>
<svg class="a" style="left:900.5px;top:166px;" width="9" height="6" viewBox="0 0 9 6"><rect x="0" y="0" width="1.4" height="6" fill="#d0d0d0"/><path d="M2.8 0V6L8.2 3z" fill="#d0d0d0"/></svg>
<svg class="a" style="left:917px;top:166px;" width="8" height="6" viewBox="0 0 8 6"><path d="M0 0V6L6 3z" fill="#d0d0d0"/><rect x="6.7" y="0" width="1.3" height="6" fill="#d0d0d0"/></svg>
<div class="a" style="left:826px;top:179px;width:130px;height:0.7px;background:#303030;"></div>
<div class="t" style="left:826.7px;top:184.10px;font-size:8px;height:9px;line-height:9px;color:#8c8c8c;;transform:scaleX(0.884);transform-origin:0 50%">ショートカット</div>
<div class="a" style="left:827px;top:196px;width:111.5px;height:11.3px;background:#181818;border-radius:1.5px;border:0.6px solid #303030;box-sizing:border-box"></div>
<div class="t" style="left:830.8px;top:197.90px;font-size:8px;height:9px;line-height:9px;color:#e0e0e0;;transform:scaleX(0.893);transform-origin:0 50%">スペースバー</div>
<svg class="a" style="left:930px;top:199.8px;" width="5" height="3.5" viewBox="0 0 5 3.5"><path d="M0.4 0.4L2.5 2.8L4.6 0.4" fill="none" stroke="#c8c8c8" stroke-width="0.9"/></svg>
<svg class="a" style="left:944px;top:197px;" width="9" height="10" viewBox="0 0 9 10"><path d="M2 4.6A3 3 0 1 1 4.6 7.8" fill="none" stroke="#d8d8d8" stroke-width="1"/><path d="M0.2 4L2 1.8L3.8 4.6z" fill="#d8d8d8"/><path d="M0.6 9.4H8.2" stroke="#d8d8d8" stroke-width="0.9"/></svg>
<div class="t" style="left:830px;top:218.15px;font-size:8.5px;height:9.5px;line-height:9.5px;color:#dcdcdc;font-weight:500;transform:scaleX(0.855);transform-origin:0 50%">エフェクト＆プリセット</div>
<svg class="a" style="left:917px;top:219.79999999999998px;" width="5.5" height="5.6" viewBox="0 0 5.5 5.6"><path d="M0 0.6H5.5M0 2.8H5.5M0 5H5.5" stroke="#8a8a8a" stroke-width="0.9"/></svg>
<div class="a" style="left:829px;top:229.6px;width:94.5px;height:1.2px;background:#c8c8c8;"></div>
<div class="a" style="left:932.8px;top:216px;width:0.7px;height:13px;background:#303030;"></div>
<svg class="a" style="left:949.5px;top:219px;" width="8" height="7" viewBox="0 0 8 7"><path d="M0.8 0.6L3.4 3.5L0.8 6.4M4.4 0.6L7 3.5L4.4 6.4" fill="none" stroke="#e0e0e0" stroke-width="1.1"/></svg>
<div class="a" style="left:826px;top:234px;width:129.5px;height:12px;background:#161616;border-radius:2px"></div>
<svg class="a" style="left:829.5px;top:236.2px;" width="11" height="8" viewBox="0 0 11 8"><circle cx="4.6" cy="3.2" r="2.4" fill="none" stroke="#d2d2d2" stroke-width="1"/><path d="M2.9 5L0.6 7.4" stroke="#d2d2d2" stroke-width="1.2"/><path d="M8 5.4H10.6L9.3 7z" fill="#d2d2d2"/></svg>
<div class="a" style="left:822px;top:248px;width:138px;height:108px;background:#212121;"></div>
<div class="a" style="left:822px;top:248.6px;width:126px;height:107.4px;overflow:hidden">
<div class="a" style="left:0;top:0.00px;width:126px;height:10.5px;background:#282828"></div>
<svg class="a" style="left:4.5px;top:2.40px" width="4" height="6" viewBox="0 0 4 6"><path d="M0.5 0.5L3 3L0.5 5.5" fill="none" stroke="#c0c0c0" stroke-width="1"/></svg>
<div class="t" style="left:10.5px;top:1.40px;font-size:8px;height:9px;line-height:9px;color:#c4c4c4;;transform:scaleX(0.769);transform-origin:0 50%">* アニメーションプリセット</div>
<div class="a" style="left:0;top:11.33px;width:126px;height:10.5px;background:#282828"></div>
<svg class="a" style="left:4.5px;top:13.73px" width="4" height="6" viewBox="0 0 4 6"><path d="M0.5 0.5L3 3L0.5 5.5" fill="none" stroke="#c0c0c0" stroke-width="1"/></svg>
<div class="t" style="left:10.5px;top:12.73px;font-size:8px;height:9px;line-height:9px;color:#c4c4c4;;transform:scaleX(0.841);transform-origin:0 50%"><span style="font-size:1.13em;line-height:1px">3D</span> チャンネル</div>
<div class="a" style="left:0;top:22.67px;width:126px;height:10.5px;background:#282828"></div>
<svg class="a" style="left:4.5px;top:25.07px" width="4" height="6" viewBox="0 0 4 6"><path d="M0.5 0.5L3 3L0.5 5.5" fill="none" stroke="#c0c0c0" stroke-width="1"/></svg>
<div class="t" style="left:10.5px;top:22.97px;font-size:9px;height:10px;line-height:10px;color:#c4c4c4;;transform:scaleX(0.820);transform-origin:0 50%">Boris FX Mocha</div>
<div class="a" style="left:0;top:34.00px;width:126px;height:10.5px;background:#282828"></div>
<svg class="a" style="left:4.5px;top:36.40px" width="4" height="6" viewBox="0 0 4 6"><path d="M0.5 0.5L3 3L0.5 5.5" fill="none" stroke="#c0c0c0" stroke-width="1"/></svg>
<div class="t" style="left:10.5px;top:34.30px;font-size:9px;height:10px;line-height:10px;color:#c4c4c4;;transform:scaleX(0.814);transform-origin:0 50%">CINEMA 4D</div>
<div class="a" style="left:0;top:45.33px;width:126px;height:10.5px;background:#282828"></div>
<svg class="a" style="left:4.5px;top:47.73px" width="4" height="6" viewBox="0 0 4 6"><path d="M0.5 0.5L3 3L0.5 5.5" fill="none" stroke="#c0c0c0" stroke-width="1"/></svg>
<div class="t" style="left:10.5px;top:45.63px;font-size:9px;height:10px;line-height:10px;color:#c4c4c4;;transform:scaleX(0.861);transform-origin:0 50%">Keying</div>
<div class="a" style="left:0;top:56.66px;width:126px;height:10.5px;background:#282828"></div>
<svg class="a" style="left:4.5px;top:59.06px" width="4" height="6" viewBox="0 0 4 6"><path d="M0.5 0.5L3 3L0.5 5.5" fill="none" stroke="#c0c0c0" stroke-width="1"/></svg>
<div class="t" style="left:10.5px;top:56.96px;font-size:9px;height:10px;line-height:10px;color:#c4c4c4;;transform:scaleX(0.910);transform-origin:0 50%">Matte</div>
<div class="a" style="left:0;top:68.00px;width:126px;height:10.5px;background:#282828"></div>
<svg class="a" style="left:4.5px;top:70.40px" width="4" height="6" viewBox="0 0 4 6"><path d="M0.5 0.5L3 3L0.5 5.5" fill="none" stroke="#c0c0c0" stroke-width="1"/></svg>
<div class="t" style="left:10.5px;top:69.40px;font-size:8px;height:9px;line-height:9px;color:#c4c4c4;;transform:scaleX(0.827);transform-origin:0 50%">イマーシブビデオ</div>
<div class="a" style="left:0;top:79.33px;width:126px;height:10.5px;background:#282828"></div>
<svg class="a" style="left:4.5px;top:81.73px" width="4" height="6" viewBox="0 0 4 6"><path d="M0.5 0.5L3 3L0.5 5.5" fill="none" stroke="#c0c0c0" stroke-width="1"/></svg>
<div class="t" style="left:10.5px;top:80.73px;font-size:8px;height:9px;line-height:9px;color:#c4c4c4;;transform:scaleX(0.798);transform-origin:0 50%">エクスプレッション制御</div>
<div class="a" style="left:0;top:90.66px;width:126px;height:10.5px;background:#282828"></div>
<svg class="a" style="left:4.5px;top:93.06px" width="4" height="6" viewBox="0 0 4 6"><path d="M0.5 0.5L3 3L0.5 5.5" fill="none" stroke="#c0c0c0" stroke-width="1"/></svg>
<div class="t" style="left:10.5px;top:92.06px;font-size:8px;height:9px;line-height:9px;color:#c4c4c4;;transform:scaleX(0.816);transform-origin:0 50%">オーディオ</div>
<div class="a" style="left:0;top:102.00px;width:126px;height:10.5px;background:#282828"></div>
<svg class="a" style="left:4.5px;top:104.40px" width="4" height="6" viewBox="0 0 4 6"><path d="M0.5 0.5L3 3L0.5 5.5" fill="none" stroke="#c0c0c0" stroke-width="1"/></svg>
<div class="t" style="left:10.5px;top:103.40px;font-size:8px;height:9px;line-height:9px;color:#c4c4c4;;transform:scaleX(0.812);transform-origin:0 50%">カラー補正</div>
</div>
<div class="a" style="left:948px;top:248px;width:10.5px;height:108px;background:#1d1d1d;"></div>
<div class="a" style="left:948.5px;top:249.5px;width:9.5px;height:41px;background:#3b3b3b;border-radius:5px"></div>
<div class="a" style="left:822px;top:356px;width:138px;height:0.8px;background:#151515;"></div>
<div class="a" style="left:822px;top:357px;width:125px;height:11.5px;background:#262626;"></div>
<svg class="a" style="left:935px;top:358.5px;" width="8" height="8" viewBox="0 0 8 8"><path d="M0 0H8V8H2.6V5.4H0z" fill="#d6d6d6"/><path d="M0 5.4L2.6 8" stroke="#d6d6d6" stroke-width="0.8"/></svg>
<div class="a" style="left:947px;top:357px;width:1px;height:11.5px;background:#151515;"></div>
<div class="a" style="left:0px;top:371.6px;width:960px;height:228.4px;background:#232323;"></div>
<div class="a" style="left:0px;top:371px;width:960px;height:2px;background:#3567ad;"></div>
<div class="a" style="left:0px;top:371px;width:2px;height:229px;background:#3567ad;"></div>
<div class="a" style="left:958px;top:371px;width:2px;height:229px;background:#3567ad;"></div>
<div class="a" style="left:0px;top:598px;width:960px;height:2px;background:#3567ad;"></div>
<svg class="a" style="left:7.5px;top:378.3px;" width="5" height="5" viewBox="0 0 5 5"><path d="M0.5 0.5L4.5 4.5M4.5 0.5L0.5 4.5" stroke="#9a9a9a" stroke-width="0.8"/></svg>
<div class="a" style="left:18px;top:377px;width:6.8px;height:6.8px;background:#c9ad80;"></div>
<div class="t" style="left:31.7px;top:376.80px;font-size:8px;height:9px;line-height:9px;color:#d4d4d4;;transform:scaleX(0.815);transform-origin:0 50%"><span style="font-size:1.13em;line-height:1px">af_thumbnail_</span>ロゴ</div>
<svg class="a" style="left:97.5px;top:378.2px;" width="5.5" height="5.6" viewBox="0 0 5.5 5.6"><path d="M0 0.6H5.5M0 2.8H5.5M0 5H5.5" stroke="#8a8a8a" stroke-width="0.9"/></svg>
<div class="t" style="left:17.7px;top:391.90px;font-size:11.2px;height:12.2px;line-height:12.2px;color:#4aa5f2;font-weight:bold;transform:scaleX(0.895);transform-origin:0 50%">0:00:00:00</div>
<div class="t" style="left:7.9px;top:403.20px;font-size:8.2px;height:9.2px;line-height:9.2px;color:#2f70b8;;transform:scaleX(1.045);transform-origin:0 50%">00000 (30.00 fps)</div>
<div class="a" style="left:83px;top:394px;width:309px;height:13.5px;background:#161616;border-radius:2px"></div>
<svg class="a" style="left:87.5px;top:397px;" width="11" height="8" viewBox="0 0 11 8"><circle cx="4.6" cy="3.2" r="2.4" fill="none" stroke="#d2d2d2" stroke-width="1"/><path d="M2.9 5L0.6 7.4" stroke="#d2d2d2" stroke-width="1.2"/><path d="M8 5.4H10.6L9.3 7z" fill="#d2d2d2"/></svg>
<svg class="a" style="left:405.5px;top:395.5px;" width="10.5" height="10.5" viewBox="0 0 10.5 10.5"><rect x="2.8" y="0.4" width="7.2" height="7.2" rx="0.8" fill="#4a4a4a" stroke="#c8c8c8" stroke-width="0.9"/><rect x="0.5" y="2.8" width="7.2" height="7.2" rx="0.8" fill="#c8c8c8"/><rect x="4.2" y="3.4" width="3" height="1.2" fill="#4a4a4a"/></svg>
<svg class="a" style="left:422.5px;top:395.5px;" width="11.5" height="10.5" viewBox="0 0 11.5 10.5"><g transform="rotate(-38 5.75 5.25)"><rect x="0.2" y="2.2" width="11" height="6.2" rx="3.1" fill="#5a5a5a" stroke="#c8c8c8" stroke-width="1"/><path d="M3 2.4V8.2M4.8 2.4V8.2" stroke="#c8c8c8" stroke-width="0.7"/></g></svg>
<svg class="a" style="left:445px;top:395.3px;" width="11.5" height="11.2" viewBox="0 0 11.5 11.2"><rect x="0.6" y="1.6" width="10.3" height="9" rx="1" fill="none" stroke="#c8c8c8" stroke-width="1"/><path d="M2 3.4C6.4 3.6 5.2 8.8 9.6 9" fill="none" stroke="#c8c8c8" stroke-width="0.9"/><path d="M3 0.2V1.6M5.75 0.2V1.6M8.5 0.2V1.6" stroke="#c8c8c8" stroke-width="0.9"/></svg>
<div class="a" style="left:1.9px;top:413.2px;width:464.40000000000003px;height:1px;background:#171717;"></div>
<div class="a" style="left:1.9px;top:414.2px;width:464.40000000000003px;height:11.8px;background:#2e2e2e;"></div>
<div class="a" style="left:1.9px;top:426px;width:464.40000000000003px;height:1px;background:#171717;"></div>
<div class="a" style="left:466.3px;top:392px;width:1.7px;height:196px;background:#151515;"></div>
<svg class="a" style="left:5px;top:417.5px;" width="8" height="5.6" viewBox="0 0 8 5.6"><path d="M0.2 2.8C2 -0.4 6 -0.4 7.8 2.8C6 6 2 6 0.2 2.8z" fill="#c6c6c6"/><circle cx="4" cy="2.8" r="1.45" fill="#262626"/></svg>
<svg class="a" style="left:16.5px;top:417px;" width="7" height="7" viewBox="0 0 7 7"><path d="M0 2.4H1.6L3.8 0.4V6.6L1.6 4.6H0z" fill="#c6c6c6"/><path d="M4.8 1.6A2.6 2.6 0 0 1 4.8 5.4M5.6 0.4A4 4 0 0 1 5.6 6.6" fill="none" stroke="#c6c6c6" stroke-width="0.7"/></svg>
<div class="a" style="left:27px;top:418.4px;width:4px;height:4px;background:#c6c6c6;border-radius:50%"></div>
<svg class="a" style="left:35px;top:416.8px;" width="6" height="7.4" viewBox="0 0 6 7.4"><path d="M1.4 3.4V2.2a1.6 1.6 0 0 1 3.2 0V3.4" fill="none" stroke="#c6c6c6" stroke-width="0.9"/><rect x="0.4" y="3.4" width="5.2" height="4" fill="#c6c6c6"/></svg>
<div class="a" style="left:47.5px;top:416px;width:0.9px;height:9px;background:#1a1a1a;"></div>
<svg class="a" style="left:55px;top:416.5px;" width="8" height="8" viewBox="0 0 8 8"><path d="M0.4 0.4H3.8L7.6 4.2L4.2 7.6L0.4 3.8z" fill="#c6c6c6"/><circle cx="2.2" cy="2.2" r="0.8" fill="#2e2e2e"/></svg>
<div class="t" style="left:72px;top:416.35px;font-size:7.5px;height:8.5px;line-height:8.5px;color:#7a7a7a;font-style:italic;">#</div>
<div class="a" style="left:81.5px;top:416px;width:0.9px;height:9px;background:#1a1a1a;"></div>
<div class="a" style="left:88.5px;top:416px;width:0.9px;height:9px;background:#1a1a1a;"></div>
<div class="t" style="left:93.8px;top:416.50px;font-size:8px;height:9px;line-height:9px;color:#9c9c9c;;transform:scaleX(0.973);transform-origin:0 50%">レイヤー名</div>
<div class="a" style="left:176.5px;top:416px;width:0.9px;height:9px;background:#1a1a1a;"></div>
<svg class="a" style="left:179.3px;top:416.40000000000003px;" width="8.6" height="7.8" viewBox="0 0 8.6 7.8"><path d="M0.9 4.7A3.4 3.9 0 0 1 7.7 4.7V5H0.9z" fill="#c6c6c6"/><ellipse cx="1.4" cy="5.3" rx="1.3" ry="0.8" fill="#c6c6c6"/><ellipse cx="7.2" cy="5.3" rx="1.3" ry="0.8" fill="#c6c6c6"/><rect x="3.75" y="2.8" width="1.1" height="4.8" rx="0.5" fill="#ececec"/><path d="M3.55 3.6V5.2M5.05 3.6V5.2" stroke="#2b2b2b" stroke-width="0.35"/><circle cx="3" cy="3" r="0.55" fill="#262626"/><circle cx="5.6" cy="3" r="0.55" fill="#262626"/></svg>
<svg class="a" style="left:190px;top:416.8px;" width="7" height="7" viewBox="0 0 7 7"><circle cx="3.5" cy="3.5" r="1.3" fill="none" stroke="#c6c6c6" stroke-width="0.8"/><path d="M3.5 0V1.4M3.5 5.6V7M0 3.5H1.4M5.6 3.5H7M1 1L2 2M5 5L6 6M6 1L5 2M2 5L1 6" stroke="#c6c6c6" stroke-width="0.7"/></svg>
<svg class="a" style="left:199px;top:416.8px;" width="8" height="7" viewBox="0 0 8 7"><path d="M0.4 0.4L7.6 6.6" stroke="#b0b0b0" stroke-width="0.9"/></svg>
<div class="t" style="left:208.5px;top:415.45px;font-size:8.5px;height:9.5px;line-height:9.5px;color:#c6c6c6;font-style:italic;font-family:&quot;Liberation Serif&quot;,serif;">fx</div>
<svg class="a" style="left:218.5px;top:417px;" width="8" height="7" viewBox="0 0 8 7"><rect x="0" y="0" width="8" height="7" rx="1" fill="#c6c6c6"/><rect x="1.4" y="1.6" width="5.2" height="3.8" fill="#6a6a6a"/></svg>
<svg class="a" style="left:228px;top:417px;" width="8" height="7" viewBox="0 0 8 7"><ellipse cx="4" cy="3.5" rx="4" ry="2.4" transform="rotate(-35 4 3.5)" fill="none" stroke="#c6c6c6" stroke-width="1"/></svg>
<svg class="a" style="left:238.5px;top:417px;" width="7" height="7" viewBox="0 0 7 7"><circle cx="3.5" cy="3.5" r="3.1" fill="none" stroke="#c6c6c6" stroke-width="0.8"/><path d="M3.5 0.4A3.1 3.1 0 0 1 3.5 6.6z" fill="#c6c6c6"/></svg>
<svg class="a" style="left:248.5px;top:417px;" width="7" height="7" viewBox="0 0 7 7"><circle cx="3.5" cy="3.5" r="3" fill="none" stroke="#c6c6c6" stroke-width="0.8"/><path d="M3.5 1.6V5.4M1.6 3.5H5.4" stroke="#c6c6c6" stroke-width="0.7"/></svg>
<div class="t" style="left:398.2px;top:416.30px;font-size:8px;height:9px;line-height:9px;color:#a4a4a4;;transform:scaleX(0.950);transform-origin:0 50%">リンク</div>
<div class="a" style="left:456.2px;top:416px;width:0.9px;height:9px;background:#1a1a1a;"></div>
<div class="a" style="left:0;top:0;width:960px;height:587.5px;overflow:hidden">
<div class="a" style="left:1.9px;top:427.0px;width:464.40000000000003px;height:11.7px;background:#2b2b2b;"></div>
<div class="a" style="left:5px;top:428.3px;width:8.3px;height:9px;background:#202020;"></div>
<div class="a" style="left:34.5px;top:428.3px;width:8.3px;height:9px;background:#202020;"></div>
<svg class="a" style="left:50.5px;top:430.1px;" width="4" height="6" viewBox="0 0 4 6"><path d="M0.5 0.5L3 3L0.5 5.5" fill="none" stroke="#c8c8c8" stroke-width="1"/></svg>
<div class="a" style="left:58px;top:428.0px;width:10.3px;height:10px;background:#b84a4a;border:0.6px solid rgba(0,0,0,.35);box-sizing:border-box"></div>
<div class="t" style="left:72.5px;top:428.50px;font-size:8.2px;height:9.2px;line-height:9.2px;color:#b4b4b4;;">1</div>
<div class="a" style="left:92px;top:428.2px;width:9px;height:9.2px;background:#fff;"></div>
<div class="t" style="left:105px;top:429.20px;font-size:8px;height:9px;line-height:9px;color:#cacaca;;transform:scaleX(0.954);transform-origin:0 50%"><span style="font-size:1.13em;line-height:1px">[</span>ヌル <span style="font-size:1.13em;line-height:1px">1]</span></div>
<svg class="a" style="left:179.3px;top:429.20000000000005px;" width="8.6" height="7.8" viewBox="0 0 8.6 7.8"><path d="M0.9 4.7A3.4 3.9 0 0 1 7.7 4.7V5H0.9z" fill="#d6d6d6"/><ellipse cx="1.4" cy="5.3" rx="1.3" ry="0.8" fill="#d6d6d6"/><ellipse cx="7.2" cy="5.3" rx="1.3" ry="0.8" fill="#d6d6d6"/><rect x="3.75" y="2.8" width="1.1" height="4.8" rx="0.5" fill="#ececec"/><path d="M3.55 3.6V5.2M5.05 3.6V5.2" stroke="#2b2b2b" stroke-width="0.35"/><circle cx="3" cy="3" r="0.55" fill="#262626"/><circle cx="5.6" cy="3" r="0.55" fill="#262626"/></svg>
<div class="a" style="left:189.3px;top:428.3px;width:8.3px;height:9px;background:#202020;"></div>
<div class="a" style="left:199.6px;top:428.3px;width:8.3px;height:9px;background:#202020;"></div>
<svg class="a" style="left:200.2px;top:429.6px;" width="7" height="7" viewBox="0 0 7 7"><path d="M0.4 6.6L6.6 0.4" stroke="#e0e0e0" stroke-width="1"/></svg>
<div class="a" style="left:229px;top:428.3px;width:8.3px;height:9px;background:#202020;"></div>
<div class="a" style="left:238.8px;top:428.3px;width:8.3px;height:9px;background:#202020;"></div>
<div class="a" style="left:248.6px;top:428.3px;width:8.3px;height:9px;background:#202020;"></div>
<div class="a" style="left:395px;top:427.8px;width:58.5px;height:10.2px;background:#1b1b1b;border-radius:1px"></div>
<div class="t" style="left:398.4px;top:429.40px;font-size:7.6px;height:8.6px;line-height:8.6px;color:#d6d6d6;;transform:scaleX(0.928);transform-origin:0 50%">なし</div>
<svg class="a" style="left:444.5px;top:431.6px;" width="5.5" height="3.6" viewBox="0 0 5.5 3.6"><path d="M0.4 0.4L2.75 2.9L5.1 0.4" fill="none" stroke="#d0d0d0" stroke-width="0.9"/></svg>
<div class="a" style="left:455px;top:427.0px;width:11.3px;height:11.7px;background:#2e2e2e;"></div>
<div class="a" style="left:1.9px;top:439.6667px;width:464.40000000000003px;height:11.7px;background:#2b2b2b;"></div>
<div class="a" style="left:5px;top:440.9667px;width:8.3px;height:9px;background:#202020;"></div>
<div class="a" style="left:34.5px;top:440.9667px;width:8.3px;height:9px;background:#202020;"></div>
<svg class="a" style="left:50.5px;top:442.7667px;" width="4" height="6" viewBox="0 0 4 6"><path d="M0.5 0.5L3 3L0.5 5.5" fill="none" stroke="#c8c8c8" stroke-width="1"/></svg>
<div class="a" style="left:58px;top:440.6667px;width:10.3px;height:10px;background:#aaaad8;border:0.6px solid rgba(0,0,0,.35);box-sizing:border-box"></div>
<div class="t" style="left:72.5px;top:441.17px;font-size:8.2px;height:9.2px;line-height:9.2px;color:#b4b4b4;;">2</div>
<div class="a" style="left:92.3px;top:440.6667px;width:8px;height:9.8px;background:#2a0c00;border:0.8px solid #e8842a;box-sizing:border-box;border-radius:1.5px"></div>
<div class="t" style="left:93.6px;top:442.37px;font-size:4.6px;height:5.6px;line-height:5.6px;color:#ff9a30;font-weight:bold;">Ai</div>
<div class="t" style="left:105px;top:440.77px;font-size:9px;height:10px;line-height:10px;color:#cacaca;;transform:scaleX(0.875);transform-origin:0 50%">mark</div>
<svg class="a" style="left:179.3px;top:441.86670000000004px;" width="8.6" height="7.8" viewBox="0 0 8.6 7.8"><path d="M0.9 4.7A3.4 3.9 0 0 1 7.7 4.7V5H0.9z" fill="#d6d6d6"/><ellipse cx="1.4" cy="5.3" rx="1.3" ry="0.8" fill="#d6d6d6"/><ellipse cx="7.2" cy="5.3" rx="1.3" ry="0.8" fill="#d6d6d6"/><rect x="3.75" y="2.8" width="1.1" height="4.8" rx="0.5" fill="#ececec"/><path d="M3.55 3.6V5.2M5.05 3.6V5.2" stroke="#2b2b2b" stroke-width="0.35"/><circle cx="3" cy="3" r="0.55" fill="#262626"/><circle cx="5.6" cy="3" r="0.55" fill="#262626"/></svg>
<div class="a" style="left:189.3px;top:440.9667px;width:8.3px;height:9px;background:#202020;"></div>
<div class="a" style="left:199.6px;top:440.9667px;width:8.3px;height:9px;background:#202020;"></div>
<svg class="a" style="left:200.2px;top:442.2667px;" width="7" height="7" viewBox="0 0 7 7"><path d="M0.4 6.6L6.6 0.4" stroke="#e0e0e0" stroke-width="1"/></svg>
<div class="a" style="left:229px;top:440.9667px;width:8.3px;height:9px;background:#202020;"></div>
<div class="a" style="left:238.8px;top:440.9667px;width:8.3px;height:9px;background:#202020;"></div>
<div class="a" style="left:248.6px;top:440.9667px;width:8.3px;height:9px;background:#202020;"></div>
<div class="a" style="left:395px;top:440.4667px;width:58.5px;height:10.2px;background:#1b1b1b;border-radius:1px"></div>
<div class="t" style="left:398.4px;top:442.07px;font-size:7.6px;height:8.6px;line-height:8.6px;color:#d6d6d6;;transform:scaleX(0.902);transform-origin:0 50%"><span style="font-size:1.13em;line-height:1px">1.</span> ヌル <span style="font-size:1.13em;line-height:1px">1</span></div>
<svg class="a" style="left:444.5px;top:444.2667px;" width="5.5" height="3.6" viewBox="0 0 5.5 3.6"><path d="M0.4 0.4L2.75 2.9L5.1 0.4" fill="none" stroke="#d0d0d0" stroke-width="0.9"/></svg>
<div class="a" style="left:455px;top:439.6667px;width:11.3px;height:11.7px;background:#2e2e2e;"></div>
<div class="a" style="left:1.9px;top:452.3334px;width:464.40000000000003px;height:11.7px;background:#2b2b2b;"></div>
<div class="a" style="left:5px;top:453.6334px;width:8.3px;height:9px;background:#202020;"></div>
<div class="a" style="left:34.5px;top:453.6334px;width:8.3px;height:9px;background:#202020;"></div>
<svg class="a" style="left:50.5px;top:455.4334px;" width="4" height="6" viewBox="0 0 4 6"><path d="M0.5 0.5L3 3L0.5 5.5" fill="none" stroke="#c8c8c8" stroke-width="1"/></svg>
<div class="a" style="left:58px;top:453.3334px;width:10.3px;height:10px;background:#e87bd8;border:0.6px solid rgba(0,0,0,.35);box-sizing:border-box"></div>
<div class="t" style="left:72.5px;top:453.83px;font-size:8.2px;height:9.2px;line-height:9.2px;color:#b4b4b4;;">3</div>
<svg class="a" style="left:92px;top:454.4334px;" width="8.4" height="8" viewBox="0 0 8.4 8"><path d="M4.2 0L5.3 2.9L8.4 3.05L5.95 5L6.8 8L4.2 6.3L1.6 8L2.45 5L0 3.05L3.1 2.9z" fill="#d8d8d8"/></svg>
<div class="t" style="left:105px;top:454.53px;font-size:8px;height:9px;line-height:9px;color:#cacaca;;transform:scaleX(0.733);transform-origin:0 50%"><span style="font-size:9.8px;line-height:1px">M</span>アウトライン</div>
<svg class="a" style="left:179.3px;top:454.53340000000003px;" width="8.6" height="7.8" viewBox="0 0 8.6 7.8"><path d="M0.9 4.7A3.4 3.9 0 0 1 7.7 4.7V5H0.9z" fill="#d6d6d6"/><ellipse cx="1.4" cy="5.3" rx="1.3" ry="0.8" fill="#d6d6d6"/><ellipse cx="7.2" cy="5.3" rx="1.3" ry="0.8" fill="#d6d6d6"/><rect x="3.75" y="2.8" width="1.1" height="4.8" rx="0.5" fill="#ececec"/><path d="M3.55 3.6V5.2M5.05 3.6V5.2" stroke="#2b2b2b" stroke-width="0.35"/><circle cx="3" cy="3" r="0.55" fill="#262626"/><circle cx="5.6" cy="3" r="0.55" fill="#262626"/></svg>
<svg class="a" style="left:190px;top:454.9334px;" width="7" height="7" viewBox="0 0 7 7"><circle cx="3.5" cy="3.5" r="1.3" fill="none" stroke="#7c7c7c" stroke-width="0.8"/><path d="M3.5 0V1.4M3.5 5.6V7M0 3.5H1.4M5.6 3.5H7M1 1L2 2M5 5L6 6M6 1L5 2M2 5L1 6" stroke="#7c7c7c" stroke-width="0.7"/></svg>
<div class="a" style="left:199.6px;top:453.6334px;width:8.3px;height:9px;background:#202020;"></div>
<svg class="a" style="left:200.2px;top:454.9334px;" width="7" height="7" viewBox="0 0 7 7"><path d="M0.4 6.6L6.6 0.4" stroke="#e0e0e0" stroke-width="1"/></svg>
<div class="a" style="left:229px;top:453.6334px;width:8.3px;height:9px;background:#202020;"></div>
<div class="a" style="left:238.8px;top:453.6334px;width:8.3px;height:9px;background:#202020;"></div>
<div class="a" style="left:248.6px;top:453.6334px;width:8.3px;height:9px;background:#202020;"></div>
<div class="a" style="left:395px;top:453.1334px;width:58.5px;height:10.2px;background:#1b1b1b;border-radius:1px"></div>
<div class="t" style="left:398.4px;top:454.73px;font-size:7.6px;height:8.6px;line-height:8.6px;color:#d6d6d6;;transform:scaleX(0.902);transform-origin:0 50%"><span style="font-size:1.13em;line-height:1px">1.</span> ヌル <span style="font-size:1.13em;line-height:1px">1</span></div>
<svg class="a" style="left:444.5px;top:456.9334px;" width="5.5" height="3.6" viewBox="0 0 5.5 3.6"><path d="M0.4 0.4L2.75 2.9L5.1 0.4" fill="none" stroke="#d0d0d0" stroke-width="0.9"/></svg>
<div class="a" style="left:455px;top:452.3334px;width:11.3px;height:11.7px;background:#2e2e2e;"></div>
<div class="a" style="left:1.9px;top:465.0001px;width:464.40000000000003px;height:11.7px;background:#2b2b2b;"></div>
<div class="a" style="left:5px;top:466.3001px;width:8.3px;height:9px;background:#202020;"></div>
<div class="a" style="left:34.5px;top:466.3001px;width:8.3px;height:9px;background:#202020;"></div>
<svg class="a" style="left:50.5px;top:468.1001px;" width="4" height="6" viewBox="0 0 4 6"><path d="M0.5 0.5L3 3L0.5 5.5" fill="none" stroke="#c8c8c8" stroke-width="1"/></svg>
<div class="a" style="left:58px;top:466.0001px;width:10.3px;height:10px;background:#e87bd8;border:0.6px solid rgba(0,0,0,.35);box-sizing:border-box"></div>
<div class="t" style="left:72.5px;top:466.50px;font-size:8.2px;height:9.2px;line-height:9.2px;color:#b4b4b4;;">4</div>
<svg class="a" style="left:92px;top:467.1001px;" width="8.4" height="8" viewBox="0 0 8.4 8"><path d="M4.2 0L5.3 2.9L8.4 3.05L5.95 5L6.8 8L4.2 6.3L1.6 8L2.45 5L0 3.05L3.1 2.9z" fill="#d8d8d8"/></svg>
<div class="t" style="left:105px;top:467.20px;font-size:8px;height:9px;line-height:9px;color:#cacaca;;transform:scaleX(0.741);transform-origin:0 50%"><span style="font-size:9.8px;line-height:1px">O</span>アウトライン</div>
<svg class="a" style="left:179.3px;top:467.2001px;" width="8.6" height="7.8" viewBox="0 0 8.6 7.8"><path d="M0.9 4.7A3.4 3.9 0 0 1 7.7 4.7V5H0.9z" fill="#d6d6d6"/><ellipse cx="1.4" cy="5.3" rx="1.3" ry="0.8" fill="#d6d6d6"/><ellipse cx="7.2" cy="5.3" rx="1.3" ry="0.8" fill="#d6d6d6"/><rect x="3.75" y="2.8" width="1.1" height="4.8" rx="0.5" fill="#ececec"/><path d="M3.55 3.6V5.2M5.05 3.6V5.2" stroke="#2b2b2b" stroke-width="0.35"/><circle cx="3" cy="3" r="0.55" fill="#262626"/><circle cx="5.6" cy="3" r="0.55" fill="#262626"/></svg>
<svg class="a" style="left:190px;top:467.6001px;" width="7" height="7" viewBox="0 0 7 7"><circle cx="3.5" cy="3.5" r="1.3" fill="none" stroke="#7c7c7c" stroke-width="0.8"/><path d="M3.5 0V1.4M3.5 5.6V7M0 3.5H1.4M5.6 3.5H7M1 1L2 2M5 5L6 6M6 1L5 2M2 5L1 6" stroke="#7c7c7c" stroke-width="0.7"/></svg>
<div class="a" style="left:199.6px;top:466.3001px;width:8.3px;height:9px;background:#202020;"></div>
<svg class="a" style="left:200.2px;top:467.6001px;" width="7" height="7" viewBox="0 0 7 7"><path d="M0.4 6.6L6.6 0.4" stroke="#e0e0e0" stroke-width="1"/></svg>
<div class="a" style="left:229px;top:466.3001px;width:8.3px;height:9px;background:#202020;"></div>
<div class="a" style="left:238.8px;top:466.3001px;width:8.3px;height:9px;background:#202020;"></div>
<div class="a" style="left:248.6px;top:466.3001px;width:8.3px;height:9px;background:#202020;"></div>
<div class="a" style="left:395px;top:465.8001px;width:58.5px;height:10.2px;background:#1b1b1b;border-radius:1px"></div>
<div class="t" style="left:398.4px;top:467.40px;font-size:7.6px;height:8.6px;line-height:8.6px;color:#d6d6d6;;transform:scaleX(0.902);transform-origin:0 50%"><span style="font-size:1.13em;line-height:1px">1.</span> ヌル <span style="font-size:1.13em;line-height:1px">1</span></div>
<svg class="a" style="left:444.5px;top:469.6001px;" width="5.5" height="3.6" viewBox="0 0 5.5 3.6"><path d="M0.4 0.4L2.75 2.9L5.1 0.4" fill="none" stroke="#d0d0d0" stroke-width="0.9"/></svg>
<div class="a" style="left:455px;top:465.0001px;width:11.3px;height:11.7px;background:#2e2e2e;"></div>
<div class="a" style="left:1.9px;top:477.6668px;width:464.40000000000003px;height:11.7px;background:#2b2b2b;"></div>
<div class="a" style="left:5px;top:478.96680000000003px;width:8.3px;height:9px;background:#202020;"></div>
<div class="a" style="left:34.5px;top:478.96680000000003px;width:8.3px;height:9px;background:#202020;"></div>
<svg class="a" style="left:50.5px;top:480.76680000000005px;" width="4" height="6" viewBox="0 0 4 6"><path d="M0.5 0.5L3 3L0.5 5.5" fill="none" stroke="#c8c8c8" stroke-width="1"/></svg>
<div class="a" style="left:58px;top:478.6668px;width:10.3px;height:10px;background:#e87bd8;border:0.6px solid rgba(0,0,0,.35);box-sizing:border-box"></div>
<div class="t" style="left:72.5px;top:479.17px;font-size:8.2px;height:9.2px;line-height:9.2px;color:#b4b4b4;;">5</div>
<svg class="a" style="left:92px;top:479.76680000000005px;" width="8.4" height="8" viewBox="0 0 8.4 8"><path d="M4.2 0L5.3 2.9L8.4 3.05L5.95 5L6.8 8L4.2 6.3L1.6 8L2.45 5L0 3.05L3.1 2.9z" fill="#d8d8d8"/></svg>
<div class="t" style="left:105px;top:479.87px;font-size:8px;height:9px;line-height:9px;color:#cacaca;;transform:scaleX(0.755);transform-origin:0 50%"><span style="font-size:9.8px;line-height:1px">V</span>アウトライン</div>
<svg class="a" style="left:179.3px;top:479.86680000000007px;" width="8.6" height="7.8" viewBox="0 0 8.6 7.8"><path d="M0.9 4.7A3.4 3.9 0 0 1 7.7 4.7V5H0.9z" fill="#d6d6d6"/><ellipse cx="1.4" cy="5.3" rx="1.3" ry="0.8" fill="#d6d6d6"/><ellipse cx="7.2" cy="5.3" rx="1.3" ry="0.8" fill="#d6d6d6"/><rect x="3.75" y="2.8" width="1.1" height="4.8" rx="0.5" fill="#ececec"/><path d="M3.55 3.6V5.2M5.05 3.6V5.2" stroke="#2b2b2b" stroke-width="0.35"/><circle cx="3" cy="3" r="0.55" fill="#262626"/><circle cx="5.6" cy="3" r="0.55" fill="#262626"/></svg>
<svg class="a" style="left:190px;top:480.26680000000005px;" width="7" height="7" viewBox="0 0 7 7"><circle cx="3.5" cy="3.5" r="1.3" fill="none" stroke="#7c7c7c" stroke-width="0.8"/><path d="M3.5 0V1.4M3.5 5.6V7M0 3.5H1.4M5.6 3.5H7M1 1L2 2M5 5L6 6M6 1L5 2M2 5L1 6" stroke="#7c7c7c" stroke-width="0.7"/></svg>
<div class="a" style="left:199.6px;top:478.96680000000003px;width:8.3px;height:9px;background:#202020;"></div>
<svg class="a" style="left:200.2px;top:480.26680000000005px;" width="7" height="7" viewBox="0 0 7 7"><path d="M0.4 6.6L6.6 0.4" stroke="#e0e0e0" stroke-width="1"/></svg>
<div class="a" style="left:229px;top:478.96680000000003px;width:8.3px;height:9px;background:#202020;"></div>
<div class="a" style="left:238.8px;top:478.96680000000003px;width:8.3px;height:9px;background:#202020;"></div>
<div class="a" style="left:248.6px;top:478.96680000000003px;width:8.3px;height:9px;background:#202020;"></div>
<div class="a" style="left:395px;top:478.46680000000003px;width:58.5px;height:10.2px;background:#1b1b1b;border-radius:1px"></div>
<div class="t" style="left:398.4px;top:480.07px;font-size:7.6px;height:8.6px;line-height:8.6px;color:#d6d6d6;;transform:scaleX(0.902);transform-origin:0 50%"><span style="font-size:1.13em;line-height:1px">1.</span> ヌル <span style="font-size:1.13em;line-height:1px">1</span></div>
<svg class="a" style="left:444.5px;top:482.26680000000005px;" width="5.5" height="3.6" viewBox="0 0 5.5 3.6"><path d="M0.4 0.4L2.75 2.9L5.1 0.4" fill="none" stroke="#d0d0d0" stroke-width="0.9"/></svg>
<div class="a" style="left:455px;top:477.6668px;width:11.3px;height:11.7px;background:#2e2e2e;"></div>
<div class="a" style="left:1.9px;top:490.3335px;width:464.40000000000003px;height:11.7px;background:#2b2b2b;"></div>
<div class="a" style="left:5px;top:491.6335px;width:8.3px;height:9px;background:#202020;"></div>
<div class="a" style="left:34.5px;top:491.6335px;width:8.3px;height:9px;background:#202020;"></div>
<svg class="a" style="left:50.5px;top:493.43350000000004px;" width="4" height="6" viewBox="0 0 4 6"><path d="M0.5 0.5L3 3L0.5 5.5" fill="none" stroke="#c8c8c8" stroke-width="1"/></svg>
<div class="a" style="left:58px;top:491.3335px;width:10.3px;height:10px;background:#e87bd8;border:0.6px solid rgba(0,0,0,.35);box-sizing:border-box"></div>
<div class="t" style="left:72.5px;top:491.83px;font-size:8.2px;height:9.2px;line-height:9.2px;color:#b4b4b4;;">6</div>
<svg class="a" style="left:92px;top:492.43350000000004px;" width="8.4" height="8" viewBox="0 0 8.4 8"><path d="M4.2 0L5.3 2.9L8.4 3.05L5.95 5L6.8 8L4.2 6.3L1.6 8L2.45 5L0 3.05L3.1 2.9z" fill="#d8d8d8"/></svg>
<div class="t" style="left:105px;top:492.53px;font-size:8px;height:9px;line-height:9px;color:#cacaca;;transform:scaleX(0.744);transform-origin:0 50%"><span style="font-size:9.8px;line-height:1px">E</span>アウトライン</div>
<svg class="a" style="left:179.3px;top:492.53350000000006px;" width="8.6" height="7.8" viewBox="0 0 8.6 7.8"><path d="M0.9 4.7A3.4 3.9 0 0 1 7.7 4.7V5H0.9z" fill="#d6d6d6"/><ellipse cx="1.4" cy="5.3" rx="1.3" ry="0.8" fill="#d6d6d6"/><ellipse cx="7.2" cy="5.3" rx="1.3" ry="0.8" fill="#d6d6d6"/><rect x="3.75" y="2.8" width="1.1" height="4.8" rx="0.5" fill="#ececec"/><path d="M3.55 3.6V5.2M5.05 3.6V5.2" stroke="#2b2b2b" stroke-width="0.35"/><circle cx="3" cy="3" r="0.55" fill="#262626"/><circle cx="5.6" cy="3" r="0.55" fill="#262626"/></svg>
<svg class="a" style="left:190px;top:492.93350000000004px;" width="7" height="7" viewBox="0 0 7 7"><circle cx="3.5" cy="3.5" r="1.3" fill="none" stroke="#7c7c7c" stroke-width="0.8"/><path d="M3.5 0V1.4M3.5 5.6V7M0 3.5H1.4M5.6 3.5H7M1 1L2 2M5 5L6 6M6 1L5 2M2 5L1 6" stroke="#7c7c7c" stroke-width="0.7"/></svg>
<div class="a" style="left:199.6px;top:491.6335px;width:8.3px;height:9px;background:#202020;"></div>
<svg class="a" style="left:200.2px;top:492.93350000000004px;" width="7" height="7" viewBox="0 0 7 7"><path d="M0.4 6.6L6.6 0.4" stroke="#e0e0e0" stroke-width="1"/></svg>
<div class="a" style="left:229px;top:491.6335px;width:8.3px;height:9px;background:#202020;"></div>
<div class="a" style="left:238.8px;top:491.6335px;width:8.3px;height:9px;background:#202020;"></div>
<div class="a" style="left:248.6px;top:491.6335px;width:8.3px;height:9px;background:#202020;"></div>
<div class="a" style="left:395px;top:491.1335px;width:58.5px;height:10.2px;background:#1b1b1b;border-radius:1px"></div>
<div class="t" style="left:398.4px;top:492.73px;font-size:7.6px;height:8.6px;line-height:8.6px;color:#d6d6d6;;transform:scaleX(0.902);transform-origin:0 50%"><span style="font-size:1.13em;line-height:1px">1.</span> ヌル <span style="font-size:1.13em;line-height:1px">1</span></div>
<svg class="a" style="left:444.5px;top:494.93350000000004px;" width="5.5" height="3.6" viewBox="0 0 5.5 3.6"><path d="M0.4 0.4L2.75 2.9L5.1 0.4" fill="none" stroke="#d0d0d0" stroke-width="0.9"/></svg>
<div class="a" style="left:455px;top:490.3335px;width:11.3px;height:11.7px;background:#2e2e2e;"></div>
<div class="a" style="left:1.9px;top:503.0002px;width:464.40000000000003px;height:11.7px;background:#474747;"></div>
<div class="a" style="left:5px;top:504.3002px;width:8.3px;height:9px;background:#3a3a3a;"></div>
<div class="a" style="left:24.5px;top:504.3002px;width:8.3px;height:9px;background:#3a3a3a;"></div>
<div class="a" style="left:34.5px;top:504.3002px;width:8.3px;height:9px;background:#3a3a3a;"></div>
<svg class="a" style="left:5.2px;top:506.3002px;" width="8" height="5.6" viewBox="0 0 8 5.6"><path d="M0.2 2.8C2 -0.4 6 -0.4 7.8 2.8C6 6 2 6 0.2 2.8z" fill="#e4e4e4"/><circle cx="4" cy="2.8" r="1.45" fill="#262626"/></svg>
<svg class="a" style="left:49.5px;top:507.60020000000003px;" width="6" height="4" viewBox="0 0 6 4"><path d="M0.5 0.5L3 3L5.5 0.5" fill="none" stroke="#c8c8c8" stroke-width="1"/></svg>
<div class="a" style="left:58px;top:504.0002px;width:10.3px;height:10px;background:#b9cfb9;border:0.6px solid rgba(0,0,0,.35);box-sizing:border-box"></div>
<div class="t" style="left:72.5px;top:504.50px;font-size:8.2px;height:9.2px;line-height:9.2px;color:#b4b4b4;;">7</div>
<svg class="a" style="left:92px;top:505.10020000000003px;" width="8.4" height="8" viewBox="0 0 8.4 8"><path d="M4.2 0L5.3 2.9L8.4 3.05L5.95 5L6.8 8L4.2 6.3L1.6 8L2.45 5L0 3.05L3.1 2.9z" fill="#d8d8d8"/></svg>
<div class="a" style="left:103px;top:503.60020000000003px;width:73px;height:10.6px;background:#a8a8a8;"></div>
<div class="t" style="left:105px;top:505.20px;font-size:8px;height:9px;line-height:9px;color:#141414;;transform:scaleX(0.756);transform-origin:0 50%"><span style="font-size:9.8px;line-height:1px">L</span>アウトライン</div>
<svg class="a" style="left:179.3px;top:505.20020000000005px;" width="8.6" height="7.8" viewBox="0 0 8.6 7.8"><path d="M0.9 4.7A3.4 3.9 0 0 1 7.7 4.7V5H0.9z" fill="#d6d6d6"/><ellipse cx="1.4" cy="5.3" rx="1.3" ry="0.8" fill="#d6d6d6"/><ellipse cx="7.2" cy="5.3" rx="1.3" ry="0.8" fill="#d6d6d6"/><rect x="3.75" y="2.8" width="1.1" height="4.8" rx="0.5" fill="#ececec"/><path d="M3.55 3.6V5.2M5.05 3.6V5.2" stroke="#2b2b2b" stroke-width="0.35"/><circle cx="3" cy="3" r="0.55" fill="#262626"/><circle cx="5.6" cy="3" r="0.55" fill="#262626"/></svg>
<svg class="a" style="left:190px;top:505.60020000000003px;" width="7" height="7" viewBox="0 0 7 7"><circle cx="3.5" cy="3.5" r="1.3" fill="none" stroke="#7c7c7c" stroke-width="0.8"/><path d="M3.5 0V1.4M3.5 5.6V7M0 3.5H1.4M5.6 3.5H7M1 1L2 2M5 5L6 6M6 1L5 2M2 5L1 6" stroke="#7c7c7c" stroke-width="0.7"/></svg>
<div class="a" style="left:199.6px;top:504.3002px;width:8.3px;height:9px;background:#3a3a3a;"></div>
<svg class="a" style="left:200.2px;top:505.60020000000003px;" width="7" height="7" viewBox="0 0 7 7"><path d="M0.4 6.6L6.6 0.4" stroke="#e0e0e0" stroke-width="1"/></svg>
<div class="a" style="left:229px;top:504.3002px;width:8.3px;height:9px;background:#3a3a3a;"></div>
<div class="a" style="left:238.8px;top:504.3002px;width:8.3px;height:9px;background:#3a3a3a;"></div>
<div class="a" style="left:248.6px;top:504.3002px;width:8.3px;height:9px;background:#3a3a3a;"></div>
<div class="a" style="left:395px;top:503.8002px;width:58.5px;height:10.2px;background:#1b1b1b;border-radius:1px"></div>
<div class="t" style="left:398.4px;top:505.40px;font-size:7.6px;height:8.6px;line-height:8.6px;color:#d6d6d6;;transform:scaleX(0.902);transform-origin:0 50%"><span style="font-size:1.13em;line-height:1px">1.</span> ヌル <span style="font-size:1.13em;line-height:1px">1</span></div>
<svg class="a" style="left:444.5px;top:507.60020000000003px;" width="5.5" height="3.6" viewBox="0 0 5.5 3.6"><path d="M0.4 0.4L2.75 2.9L5.1 0.4" fill="none" stroke="#d0d0d0" stroke-width="0.9"/></svg>
<div class="a" style="left:455px;top:503.0002px;width:11.3px;height:11.7px;background:#484848;"></div>
<div class="a" style="left:1.9px;top:515.6668999999999px;width:464.40000000000003px;height:11.7px;background:#232323;"></div>
<div class="a" style="left:1.9px;top:527.3669px;width:464.40000000000003px;height:0.97px;background:#1c1c1c;"></div>
<svg class="a" style="left:62.5px;top:520.2669px;" width="6" height="4" viewBox="0 0 6 4"><path d="M0.5 0.5L3 3L5.5 0.5" fill="none" stroke="#c8c8c8" stroke-width="1"/></svg>
<div class="t" style="left:73.7px;top:517.87px;font-size:8px;height:9px;line-height:9px;color:#c4c4c4;;transform:scaleX(0.812);transform-origin:0 50%">コンテンツ</div>
<div class="t" style="left:237.7px;top:518.07px;font-size:7.6px;height:8.6px;line-height:8.6px;color:#c4c4c4;text-decoration:underline;text-decoration-color:#8a8a8a;text-decoration-thickness:0.6px;transform:scaleX(0.909);transform-origin:0 50%">追加</div>
<div class="t" style="left:252.3px;top:517.47px;font-size:7.6px;height:8.6px;line-height:8.6px;color:#c4c4c4;;">:</div>
<div class="a" style="left:1.9px;top:528.3336px;width:464.40000000000003px;height:11.7px;background:#232323;"></div>
<div class="a" style="left:1.9px;top:540.0336000000001px;width:464.40000000000003px;height:0.97px;background:#1c1c1c;"></div>
<div class="a" style="left:5px;top:529.6336px;width:8.3px;height:9px;background:#202020;"></div>
<svg class="a" style="left:5.2px;top:531.6336000000001px;" width="8" height="5.6" viewBox="0 0 8 5.6"><path d="M0.2 2.8C2 -0.4 6 -0.4 7.8 2.8C6 6 2 6 0.2 2.8z" fill="#e4e4e4"/><circle cx="4" cy="2.8" r="1.45" fill="#262626"/></svg>
<svg class="a" style="left:76px;top:531.4336000000001px;" width="4" height="6" viewBox="0 0 4 6"><path d="M0.5 0.5L3 3L0.5 5.5" fill="none" stroke="#c8c8c8" stroke-width="1"/></svg>
<div class="t" style="left:87px;top:530.53px;font-size:8px;height:9px;line-height:9px;color:#c4c4c4;;transform:scaleX(0.882);transform-origin:0 50%">グループ <span style="font-size:1.13em;line-height:1px">1</span></div>
<div class="a" style="left:180px;top:529.1336px;width:60px;height:10.2px;background:#1b1b1b;border-radius:1px"></div>
<div class="t" style="left:183.8px;top:530.73px;font-size:7.6px;height:8.6px;line-height:8.6px;color:#d6d6d6;;transform:scaleX(0.981);transform-origin:0 50%">通常</div>
<div class="a" style="left:1.9px;top:541.0003px;width:464.40000000000003px;height:11.7px;background:#232323;"></div>
<div class="a" style="left:1.9px;top:552.7003000000001px;width:464.40000000000003px;height:0.97px;background:#1c1c1c;"></div>
<svg class="a" style="left:63.5px;top:544.1003000000001px;" width="4" height="6" viewBox="0 0 4 6"><path d="M0.5 0.5L3 3L0.5 5.5" fill="none" stroke="#c8c8c8" stroke-width="1"/></svg>
<div class="t" style="left:73.7px;top:543.20px;font-size:8px;height:9px;line-height:9px;color:#c4c4c4;;transform:scaleX(0.786);transform-origin:0 50%">トランスフォーム</div>
<div class="t" style="left:178.7px;top:543.50px;font-size:7.4px;height:8.4px;line-height:8.4px;color:#3f8fe0;;transform:scaleX(0.534);transform-origin:0 50%">リセット</div>
<div class="a" style="left:1.9px;top:553.667px;width:464.40000000000003px;height:11.7px;background:#2b2b2b;"></div>
<div class="a" style="left:5px;top:554.967px;width:8.3px;height:9px;background:#202020;"></div>
<div class="a" style="left:24.5px;top:554.967px;width:8.3px;height:9px;background:#202020;"></div>
<div class="a" style="left:34.5px;top:554.967px;width:8.3px;height:9px;background:#202020;"></div>
<svg class="a" style="left:5.2px;top:556.9670000000001px;" width="8" height="5.6" viewBox="0 0 8 5.6"><path d="M0.2 2.8C2 -0.4 6 -0.4 7.8 2.8C6 6 2 6 0.2 2.8z" fill="#e4e4e4"/><circle cx="4" cy="2.8" r="1.45" fill="#262626"/></svg>
<svg class="a" style="left:50.5px;top:556.767px;" width="4" height="6" viewBox="0 0 4 6"><path d="M0.5 0.5L3 3L0.5 5.5" fill="none" stroke="#c8c8c8" stroke-width="1"/></svg>
<div class="a" style="left:58px;top:554.667px;width:10.3px;height:10px;background:#b9cfb9;border:0.6px solid rgba(0,0,0,.35);box-sizing:border-box"></div>
<div class="t" style="left:72.5px;top:555.17px;font-size:8.2px;height:9.2px;line-height:9.2px;color:#b4b4b4;;">8</div>
<svg class="a" style="left:92px;top:555.767px;" width="8.4" height="8" viewBox="0 0 8.4 8"><path d="M4.2 0L5.3 2.9L8.4 3.05L5.95 5L6.8 8L4.2 6.3L1.6 8L2.45 5L0 3.05L3.1 2.9z" fill="#d8d8d8"/></svg>
<div class="t" style="left:105px;top:555.87px;font-size:8px;height:9px;line-height:9px;color:#cacaca;;transform:scaleX(0.741);transform-origin:0 50%"><span style="font-size:9.8px;line-height:1px">O</span>アウトライン</div>
<svg class="a" style="left:179.3px;top:555.8670000000001px;" width="8.6" height="7.8" viewBox="0 0 8.6 7.8"><path d="M0.9 4.7A3.4 3.9 0 0 1 7.7 4.7V5H0.9z" fill="#d6d6d6"/><ellipse cx="1.4" cy="5.3" rx="1.3" ry="0.8" fill="#d6d6d6"/><ellipse cx="7.2" cy="5.3" rx="1.3" ry="0.8" fill="#d6d6d6"/><rect x="3.75" y="2.8" width="1.1" height="4.8" rx="0.5" fill="#ececec"/><path d="M3.55 3.6V5.2M5.05 3.6V5.2" stroke="#2b2b2b" stroke-width="0.35"/><circle cx="3" cy="3" r="0.55" fill="#262626"/><circle cx="5.6" cy="3" r="0.55" fill="#262626"/></svg>
<svg class="a" style="left:190px;top:556.267px;" width="7" height="7" viewBox="0 0 7 7"><circle cx="3.5" cy="3.5" r="1.3" fill="none" stroke="#7c7c7c" stroke-width="0.8"/><path d="M3.5 0V1.4M3.5 5.6V7M0 3.5H1.4M5.6 3.5H7M1 1L2 2M5 5L6 6M6 1L5 2M2 5L1 6" stroke="#7c7c7c" stroke-width="0.7"/></svg>
<div class="a" style="left:199.6px;top:554.967px;width:8.3px;height:9px;background:#202020;"></div>
<svg class="a" style="left:200.2px;top:556.267px;" width="7" height="7" viewBox="0 0 7 7"><path d="M0.4 6.6L6.6 0.4" stroke="#e0e0e0" stroke-width="1"/></svg>
<div class="a" style="left:229px;top:554.967px;width:8.3px;height:9px;background:#202020;"></div>
<div class="a" style="left:238.8px;top:554.967px;width:8.3px;height:9px;background:#202020;"></div>
<div class="a" style="left:248.6px;top:554.967px;width:8.3px;height:9px;background:#202020;"></div>
<div class="a" style="left:395px;top:554.467px;width:58.5px;height:10.2px;background:#1b1b1b;border-radius:1px"></div>
<div class="t" style="left:398.4px;top:556.07px;font-size:7.6px;height:8.6px;line-height:8.6px;color:#d6d6d6;;transform:scaleX(0.902);transform-origin:0 50%"><span style="font-size:1.13em;line-height:1px">1.</span> ヌル <span style="font-size:1.13em;line-height:1px">1</span></div>
<svg class="a" style="left:444.5px;top:558.267px;" width="5.5" height="3.6" viewBox="0 0 5.5 3.6"><path d="M0.4 0.4L2.75 2.9L5.1 0.4" fill="none" stroke="#d0d0d0" stroke-width="0.9"/></svg>
<div class="a" style="left:455px;top:553.667px;width:11.3px;height:11.7px;background:#2e2e2e;"></div>
<div class="a" style="left:1.9px;top:566.3337px;width:464.40000000000003px;height:11.7px;background:#2b2b2b;"></div>
<div class="a" style="left:5px;top:567.6337px;width:8.3px;height:9px;background:#202020;"></div>
<div class="a" style="left:24.5px;top:567.6337px;width:8.3px;height:9px;background:#202020;"></div>
<div class="a" style="left:34.5px;top:567.6337px;width:8.3px;height:9px;background:#202020;"></div>
<svg class="a" style="left:5.2px;top:569.6337000000001px;" width="8" height="5.6" viewBox="0 0 8 5.6"><path d="M0.2 2.8C2 -0.4 6 -0.4 7.8 2.8C6 6 2 6 0.2 2.8z" fill="#e4e4e4"/><circle cx="4" cy="2.8" r="1.45" fill="#262626"/></svg>
<svg class="a" style="left:50.5px;top:569.4337px;" width="4" height="6" viewBox="0 0 4 6"><path d="M0.5 0.5L3 3L0.5 5.5" fill="none" stroke="#c8c8c8" stroke-width="1"/></svg>
<div class="a" style="left:58px;top:567.3337px;width:10.3px;height:10px;background:#b9cfb9;border:0.6px solid rgba(0,0,0,.35);box-sizing:border-box"></div>
<div class="t" style="left:72.5px;top:567.83px;font-size:8.2px;height:9.2px;line-height:9.2px;color:#b4b4b4;;">9</div>
<svg class="a" style="left:92px;top:568.4337px;" width="8.4" height="8" viewBox="0 0 8.4 8"><path d="M4.2 0L5.3 2.9L8.4 3.05L5.95 5L6.8 8L4.2 6.3L1.6 8L2.45 5L0 3.05L3.1 2.9z" fill="#d8d8d8"/></svg>
<div class="t" style="left:105px;top:568.53px;font-size:8px;height:9px;line-height:9px;color:#cacaca;;transform:scaleX(0.741);transform-origin:0 50%"><span style="font-size:9.8px;line-height:1px">G</span>アウトライン</div>
<svg class="a" style="left:179.3px;top:568.5337000000001px;" width="8.6" height="7.8" viewBox="0 0 8.6 7.8"><path d="M0.9 4.7A3.4 3.9 0 0 1 7.7 4.7V5H0.9z" fill="#d6d6d6"/><ellipse cx="1.4" cy="5.3" rx="1.3" ry="0.8" fill="#d6d6d6"/><ellipse cx="7.2" cy="5.3" rx="1.3" ry="0.8" fill="#d6d6d6"/><rect x="3.75" y="2.8" width="1.1" height="4.8" rx="0.5" fill="#ececec"/><path d="M3.55 3.6V5.2M5.05 3.6V5.2" stroke="#2b2b2b" stroke-width="0.35"/><circle cx="3" cy="3" r="0.55" fill="#262626"/><circle cx="5.6" cy="3" r="0.55" fill="#262626"/></svg>
<svg class="a" style="left:190px;top:568.9337px;" width="7" height="7" viewBox="0 0 7 7"><circle cx="3.5" cy="3.5" r="1.3" fill="none" stroke="#7c7c7c" stroke-width="0.8"/><path d="M3.5 0V1.4M3.5 5.6V7M0 3.5H1.4M5.6 3.5H7M1 1L2 2M5 5L6 6M6 1L5 2M2 5L1 6" stroke="#7c7c7c" stroke-width="0.7"/></svg>
<div class="a" style="left:199.6px;top:567.6337px;width:8.3px;height:9px;background:#202020;"></div>
<svg class="a" style="left:200.2px;top:568.9337px;" width="7" height="7" viewBox="0 0 7 7"><path d="M0.4 6.6L6.6 0.4" stroke="#e0e0e0" stroke-width="1"/></svg>
<div class="a" style="left:229px;top:567.6337px;width:8.3px;height:9px;background:#202020;"></div>
<div class="a" style="left:238.8px;top:567.6337px;width:8.3px;height:9px;background:#202020;"></div>
<div class="a" style="left:248.6px;top:567.6337px;width:8.3px;height:9px;background:#202020;"></div>
<div class="a" style="left:395px;top:567.1337px;width:58.5px;height:10.2px;background:#1b1b1b;border-radius:1px"></div>
<div class="t" style="left:398.4px;top:568.73px;font-size:7.6px;height:8.6px;line-height:8.6px;color:#d6d6d6;;transform:scaleX(0.902);transform-origin:0 50%"><span style="font-size:1.13em;line-height:1px">1.</span> ヌル <span style="font-size:1.13em;line-height:1px">1</span></div>
<svg class="a" style="left:444.5px;top:570.9337px;" width="5.5" height="3.6" viewBox="0 0 5.5 3.6"><path d="M0.4 0.4L2.75 2.9L5.1 0.4" fill="none" stroke="#d0d0d0" stroke-width="0.9"/></svg>
<div class="a" style="left:455px;top:566.3337px;width:11.3px;height:11.7px;background:#2e2e2e;"></div>
<div class="a" style="left:1.9px;top:579.0004px;width:464.40000000000003px;height:11.7px;background:#2b2b2b;"></div>
<div class="a" style="left:5px;top:580.3004px;width:8.3px;height:9px;background:#202020;"></div>
<div class="a" style="left:24.5px;top:580.3004px;width:8.3px;height:9px;background:#202020;"></div>
<div class="a" style="left:34.5px;top:580.3004px;width:8.3px;height:9px;background:#202020;"></div>
<svg class="a" style="left:5.2px;top:582.3004000000001px;" width="8" height="5.6" viewBox="0 0 8 5.6"><path d="M0.2 2.8C2 -0.4 6 -0.4 7.8 2.8C6 6 2 6 0.2 2.8z" fill="#e4e4e4"/><circle cx="4" cy="2.8" r="1.45" fill="#262626"/></svg>
<svg class="a" style="left:50.5px;top:582.1004px;" width="4" height="6" viewBox="0 0 4 6"><path d="M0.5 0.5L3 3L0.5 5.5" fill="none" stroke="#c8c8c8" stroke-width="1"/></svg>
<div class="a" style="left:58px;top:580.0004px;width:10.3px;height:10px;background:#b9cfb9;border:0.6px solid rgba(0,0,0,.35);box-sizing:border-box"></div>
<div class="t" style="left:72.5px;top:580.50px;font-size:8.2px;height:9.2px;line-height:9.2px;color:#b4b4b4;;">10</div>
<svg class="a" style="left:92px;top:581.1004px;" width="8.4" height="8" viewBox="0 0 8.4 8"><path d="M4.2 0L5.3 2.9L8.4 3.05L5.95 5L6.8 8L4.2 6.3L1.6 8L2.45 5L0 3.05L3.1 2.9z" fill="#d8d8d8"/></svg>
<div class="t" style="left:105px;top:581.20px;font-size:8px;height:9px;line-height:9px;color:#cacaca;;transform:scaleX(0.741);transform-origin:0 50%"><span style="font-size:9.8px;line-height:1px">O</span>アウトライン</div>
<svg class="a" style="left:179.3px;top:581.2004000000001px;" width="8.6" height="7.8" viewBox="0 0 8.6 7.8"><path d="M0.9 4.7A3.4 3.9 0 0 1 7.7 4.7V5H0.9z" fill="#d6d6d6"/><ellipse cx="1.4" cy="5.3" rx="1.3" ry="0.8" fill="#d6d6d6"/><ellipse cx="7.2" cy="5.3" rx="1.3" ry="0.8" fill="#d6d6d6"/><rect x="3.75" y="2.8" width="1.1" height="4.8" rx="0.5" fill="#ececec"/><path d="M3.55 3.6V5.2M5.05 3.6V5.2" stroke="#2b2b2b" stroke-width="0.35"/><circle cx="3" cy="3" r="0.55" fill="#262626"/><circle cx="5.6" cy="3" r="0.55" fill="#262626"/></svg>
<svg class="a" style="left:190px;top:581.6004px;" width="7" height="7" viewBox="0 0 7 7"><circle cx="3.5" cy="3.5" r="1.3" fill="none" stroke="#7c7c7c" stroke-width="0.8"/><path d="M3.5 0V1.4M3.5 5.6V7M0 3.5H1.4M5.6 3.5H7M1 1L2 2M5 5L6 6M6 1L5 2M2 5L1 6" stroke="#7c7c7c" stroke-width="0.7"/></svg>
<div class="a" style="left:199.6px;top:580.3004px;width:8.3px;height:9px;background:#202020;"></div>
<svg class="a" style="left:200.2px;top:581.6004px;" width="7" height="7" viewBox="0 0 7 7"><path d="M0.4 6.6L6.6 0.4" stroke="#e0e0e0" stroke-width="1"/></svg>
<div class="a" style="left:229px;top:580.3004px;width:8.3px;height:9px;background:#202020;"></div>
<div class="a" style="left:238.8px;top:580.3004px;width:8.3px;height:9px;background:#202020;"></div>
<div class="a" style="left:248.6px;top:580.3004px;width:8.3px;height:9px;background:#202020;"></div>
<div class="a" style="left:395px;top:579.8004px;width:58.5px;height:10.2px;background:#1b1b1b;border-radius:1px"></div>
<div class="t" style="left:398.4px;top:581.40px;font-size:7.6px;height:8.6px;line-height:8.6px;color:#d6d6d6;;transform:scaleX(0.902);transform-origin:0 50%"><span style="font-size:1.13em;line-height:1px">1.</span> ヌル <span style="font-size:1.13em;line-height:1px">1</span></div>
<svg class="a" style="left:444.5px;top:583.6004px;" width="5.5" height="3.6" viewBox="0 0 5.5 3.6"><path d="M0.4 0.4L2.75 2.9L5.1 0.4" fill="none" stroke="#d0d0d0" stroke-width="0.9"/></svg>
<div class="a" style="left:455px;top:579.0004px;width:11.3px;height:11.7px;background:#2e2e2e;"></div>
</div>
<div class="a" style="left:470px;top:394px;width:472.79999999999995px;height:5px;background:#6c6c6c;"></div>
<div class="a" style="left:467.3px;top:393.6px;width:5px;height:5.8px;background:#4a9cf5;border-radius:3px 0 0 3px"></div>
<div class="a" style="left:942.8px;top:393.6px;width:4.2px;height:5.8px;background:#4a9cf5;border-radius:0 3px 3px 0"></div>
<div class="a" style="left:468px;top:399.4px;width:490px;height:14px;background:#232323;"></div>
<div class="t" style="left:471.1px;top:400.10px;font-size:8px;height:9px;line-height:9px;color:#c4c4c4;;">00f</div>
<div class="t" style="left:493.69px;top:400.10px;font-size:8px;height:9px;line-height:9px;color:#c4c4c4;;transform:scaleX(1.124);transform-origin:0 50%">00:15f</div>
<div class="a" style="left:505.78571428571433px;top:410px;width:0.8px;height:3.4px;background:#9a9a9a;"></div>
<div class="t" style="left:527.27px;top:400.10px;font-size:8px;height:9px;line-height:9px;color:#c4c4c4;;transform:scaleX(1.124);transform-origin:0 50%">01:00f</div>
<div class="a" style="left:539.3714285714286px;top:410px;width:0.8px;height:3.4px;background:#9a9a9a;"></div>
<div class="t" style="left:560.86px;top:400.10px;font-size:8px;height:9px;line-height:9px;color:#c4c4c4;;transform:scaleX(1.124);transform-origin:0 50%">01:15f</div>
<div class="a" style="left:572.9571428571429px;top:410px;width:0.8px;height:3.4px;background:#9a9a9a;"></div>
<div class="t" style="left:594.44px;top:400.10px;font-size:8px;height:9px;line-height:9px;color:#c4c4c4;;transform:scaleX(1.124);transform-origin:0 50%">02:00f</div>
<div class="a" style="left:606.5428571428572px;top:410px;width:0.8px;height:3.4px;background:#9a9a9a;"></div>
<div class="t" style="left:628.03px;top:400.10px;font-size:8px;height:9px;line-height:9px;color:#c4c4c4;;transform:scaleX(1.124);transform-origin:0 50%">02:15f</div>
<div class="a" style="left:640.1285714285715px;top:410px;width:0.8px;height:3.4px;background:#9a9a9a;"></div>
<div class="t" style="left:661.61px;top:400.10px;font-size:8px;height:9px;line-height:9px;color:#c4c4c4;;transform:scaleX(1.124);transform-origin:0 50%">03:00f</div>
<div class="a" style="left:673.7142857142857px;top:410px;width:0.8px;height:3.4px;background:#9a9a9a;"></div>
<div class="t" style="left:695.2px;top:400.10px;font-size:8px;height:9px;line-height:9px;color:#c4c4c4;;transform:scaleX(1.124);transform-origin:0 50%">03:15f</div>
<div class="a" style="left:707.3000000000001px;top:410px;width:0.8px;height:3.4px;background:#9a9a9a;"></div>
<div class="t" style="left:728.79px;top:400.10px;font-size:8px;height:9px;line-height:9px;color:#c4c4c4;;transform:scaleX(1.124);transform-origin:0 50%">04:00f</div>
<div class="a" style="left:740.8857142857142px;top:410px;width:0.8px;height:3.4px;background:#9a9a9a;"></div>
<div class="t" style="left:762.37px;top:400.10px;font-size:8px;height:9px;line-height:9px;color:#c4c4c4;;transform:scaleX(1.124);transform-origin:0 50%">04:15f</div>
<div class="a" style="left:774.4714285714286px;top:410px;width:0.8px;height:3.4px;background:#9a9a9a;"></div>
<div class="t" style="left:795.96px;top:400.10px;font-size:8px;height:9px;line-height:9px;color:#c4c4c4;;transform:scaleX(1.124);transform-origin:0 50%">05:00f</div>
<div class="a" style="left:808.0571428571428px;top:410px;width:0.8px;height:3.4px;background:#9a9a9a;"></div>
<div class="t" style="left:829.54px;top:400.10px;font-size:8px;height:9px;line-height:9px;color:#c4c4c4;;transform:scaleX(1.124);transform-origin:0 50%">05:15f</div>
<div class="a" style="left:841.6428571428572px;top:410px;width:0.8px;height:3.4px;background:#9a9a9a;"></div>
<div class="t" style="left:863.13px;top:400.10px;font-size:8px;height:9px;line-height:9px;color:#c4c4c4;;transform:scaleX(1.124);transform-origin:0 50%">06:00f</div>
<div class="a" style="left:875.2285714285714px;top:410px;width:0.8px;height:3.4px;background:#9a9a9a;"></div>
<div class="t" style="left:896.71px;top:400.10px;font-size:8px;height:9px;line-height:9px;color:#c4c4c4;;transform:scaleX(1.124);transform-origin:0 50%">06:15f</div>
<div class="a" style="left:908.8142857142857px;top:410px;width:0.8px;height:3.4px;background:#9a9a9a;"></div>
<div class="t" style="left:930.3px;top:400.10px;font-size:8px;height:9px;line-height:9px;color:#c4c4c4;;">07:0</div>
<div class="a" style="left:942.4px;top:410px;width:0.8px;height:3.4px;background:#9a9a9a;"></div>
<div class="a" style="left:468px;top:413.4px;width:490px;height:0.8px;background:#151515;"></div>
<div class="a" style="left:472px;top:414.2px;width:470.79999999999995px;height:9.2px;background:#6a6a6a;"></div>
<div class="a" style="left:468px;top:414px;width:4.6px;height:9.6px;background:#4a9cf5;border-radius:2.5px 0 0 2.5px"></div>
<div class="a" style="left:941.5999999999999px;top:414px;width:4px;height:9.6px;background:#4a9cf5;border-radius:0 2.5px 2.5px 0"></div>
<div class="a" style="left:472.6px;top:424px;width:470.19999999999993px;height:2.2px;background:#38c534;"></div>
<div class="a" style="left:472.6px;top:426.2px;width:470.19999999999993px;height:161px;background:#1b1b1b;"></div>
<div class="a" style="left:0;top:0;width:960px;height:587.5px;overflow:hidden">
<div class="a" style="left:468px;top:427.0px;width:4.6px;height:11.7px;background:#262626;"></div>
<div class="a" style="left:472.6px;top:427.0px;width:470.19999999999993px;height:11.2px;background:#7b403f;"></div>
<div class="a" style="left:468px;top:439.6667px;width:4.6px;height:11.7px;background:#262626;"></div>
<div class="a" style="left:472.6px;top:439.6667px;width:470.19999999999993px;height:11.2px;background:#7b7b90;"></div>
<div class="a" style="left:468px;top:452.3334px;width:4.6px;height:11.7px;background:#262626;"></div>
<div class="a" style="left:472.6px;top:452.3334px;width:470.19999999999993px;height:11.2px;background:#9a5f8f;"></div>
<div class="a" style="left:468px;top:465.0001px;width:4.6px;height:11.7px;background:#262626;"></div>
<div class="a" style="left:472.6px;top:465.0001px;width:470.19999999999993px;height:11.2px;background:#9a5f8f;"></div>
<div class="a" style="left:468px;top:477.6668px;width:4.6px;height:11.7px;background:#262626;"></div>
<div class="a" style="left:472.6px;top:477.6668px;width:470.19999999999993px;height:11.2px;background:#9a5f8f;"></div>
<div class="a" style="left:468px;top:490.3335px;width:4.6px;height:11.7px;background:#262626;"></div>
<div class="a" style="left:472.6px;top:490.3335px;width:470.19999999999993px;height:11.2px;background:#9a5f8f;"></div>
<div class="a" style="left:468px;top:503.0002px;width:4.6px;height:11.7px;background:#262626;"></div>
<div class="a" style="left:472.6px;top:503.0002px;width:470.19999999999993px;height:11.2px;background:linear-gradient(180deg,#bac8b5,#aab9a6);"></div>
<div class="a" style="left:942.8px;top:503.0002px;width:4px;height:11.2px;background:#3e3e3e;"></div>
<div class="a" style="left:468px;top:515.6668999999999px;width:4.6px;height:11.7px;background:#262626;"></div>
<div class="a" style="left:472.6px;top:515.6668999999999px;width:474.19999999999993px;height:11.7px;background:#333333;"></div>
<div class="a" style="left:472.6px;top:527.3669px;width:474.19999999999993px;height:0.97px;background:#262626;"></div>
<div class="a" style="left:468px;top:528.3336px;width:4.6px;height:11.7px;background:#262626;"></div>
<div class="a" style="left:472.6px;top:528.3336px;width:474.19999999999993px;height:11.7px;background:#333333;"></div>
<div class="a" style="left:472.6px;top:540.0336000000001px;width:474.19999999999993px;height:0.97px;background:#262626;"></div>
<div class="a" style="left:468px;top:541.0003px;width:4.6px;height:11.7px;background:#262626;"></div>
<div class="a" style="left:472.6px;top:541.0003px;width:474.19999999999993px;height:11.7px;background:#333333;"></div>
<div class="a" style="left:472.6px;top:552.7003000000001px;width:474.19999999999993px;height:0.97px;background:#262626;"></div>
<div class="a" style="left:468px;top:553.667px;width:4.6px;height:11.7px;background:#262626;"></div>
<div class="a" style="left:472.6px;top:553.667px;width:470.19999999999993px;height:11.2px;background:#858d81;"></div>
<div class="a" style="left:468px;top:566.3337px;width:4.6px;height:11.7px;background:#262626;"></div>
<div class="a" style="left:472.6px;top:566.3337px;width:470.19999999999993px;height:11.2px;background:#858d81;"></div>
<div class="a" style="left:468px;top:579.0004px;width:4.6px;height:11.7px;background:#262626;"></div>
<div class="a" style="left:472.6px;top:579.0004px;width:470.19999999999993px;height:11.2px;background:#858d81;"></div>
</div>
<div class="a" style="left:472px;top:406px;width:1.1px;height:182px;background:#4a9cf5;"></div>
<svg class="a" style="left:468px;top:402.6px;" width="9" height="8.6" viewBox="0 0 9 8.6"><path d="M0.6 0H8.4V4.2L4.5 8.6L0.6 4.2z" fill="#4a9cf5"/></svg>
<svg class="a" style="left:470.7px;top:518.0668999999999px;" width="3.8" height="7" viewBox="0 0 3.8 7"><path d="M0 0.4H3.8M0 6.6H3.8M1.9 0.4V6.6" stroke="#e0e0e0" stroke-width="0.9"/></svg>
<svg class="a" style="left:470.7px;top:530.7336px;" width="3.8" height="7" viewBox="0 0 3.8 7"><path d="M0 0.4H3.8M0 6.6H3.8M1.9 0.4V6.6" stroke="#e0e0e0" stroke-width="0.9"/></svg>
<svg class="a" style="left:470.7px;top:543.4003px;" width="3.8" height="7" viewBox="0 0 3.8 7"><path d="M0 0.4H3.8M0 6.6H3.8M1.9 0.4V6.6" stroke="#e0e0e0" stroke-width="0.9"/></svg>
<svg class="a" style="left:948.5px;top:414.5px;" width="8" height="9" viewBox="0 0 8 9"><path d="M0.4 0.4H7.6V5.2L4 8.6L0.4 5.2z" fill="#c0c0c0"/></svg>
<svg class="a" style="left:947.5px;top:428px;" width="9" height="8" viewBox="0 0 9 8"><path d="M0.4 4L3.6 0.8H8.6V7.2H3.6z" fill="none" stroke="#d0d0d0" stroke-width="0.9"/><path d="M5 2.4H8.6V5.6H5z" fill="#d0d0d0"/></svg>
<div class="a" style="left:948.2px;top:438.5px;width:8.6px;height:148px;background:#1a1a1a;border-radius:4.3px"></div>
<div class="a" style="left:1.9px;top:587.6px;width:955.9px;height:10.2px;background:#282828;"></div>
<div class="a" style="left:1.9px;top:587.0px;width:955.9px;height:0.8px;background:#161616;"></div>
<svg class="a" style="left:5px;top:589px;" width="7" height="8" viewBox="0 0 7 8"><path d="M0.6 0.6H4L6.4 3V7.4H3L0.6 5z" fill="none" stroke="#3f8fe0" stroke-width="1"/><path d="M2 2L5 5.6" stroke="#3f8fe0" stroke-width="1"/></svg>
<svg class="a" style="left:17px;top:589.2px;" width="9" height="8" viewBox="0 0 9 8"><circle cx="3.2" cy="3.2" r="2.7" fill="none" stroke="#3f8fe0" stroke-width="1"/><circle cx="5.8" cy="4.8" r="2.7" fill="none" stroke="#3f8fe0" stroke-width="1"/></svg>
<svg class="a" style="left:30px;top:589px;" width="7" height="8" viewBox="0 0 7 8"><path d="M2 0.4C0.6 0.4 1.8 3.6 0.2 4C1.8 4.4 0.6 7.6 2 7.6M5 0.4C6.4 0.4 5.2 3.6 6.8 4C5.2 4.4 6.4 7.6 5 7.6" fill="none" stroke="#c8c8c8" stroke-width="0.9"/><path d="M2.6 2H4.4M2.6 4H4.4M2.6 6H4.4" stroke="#c8c8c8" stroke-width="0.8"/></svg>
<svg class="a" style="left:471.5px;top:590.8px;" width="7" height="4" viewBox="0 0 7 4"><path d="M0 4L2.4 0.6L4 2.6L5 1.6L7 4z" fill="#d0d0d0"/></svg>
<div class="a" style="left:490px;top:592.6px;width:27px;height:0.8px;background:#4a4a4a;"></div>
<div class="a" style="left:485.4px;top:590.2px;width:5.4px;height:5.4px;background:transparent;border:1px solid #d0d0d0;border-radius:50%;box-sizing:border-box"></div>
<svg class="a" style="left:524.5px;top:589.4px;" width="11" height="5.6" viewBox="0 0 11 5.6"><path d="M0 5.6L3.6 0.4L6 3.6L7.6 1.4L11 5.6z" fill="#d0d0d0"/></svg>
<div class="a" style="left:256px;top:326px;width:139.2px;height:269.4px;border-radius:4.5px;overflow:hidden;background:linear-gradient(180deg,#d7d7d7 0px,#d1d1d1 14px,#c3c3c3 27px,#b9b9b9 40px,#b3b3b3 60px,#b0b0b0 90px,#afafaf 100%);box-shadow:0 4px 14px rgba(0,0,0,.45),0 0 0 0.5px rgba(0,0,0,.35)">
<div class="a" style="left:0;top:18.6px;width:140px;height:0.9px;background:#9c9c9c"></div>
<div class="a" style="left:0;top:77.4px;width:140px;height:0.9px;background:#9c9c9c"></div>
<div class="a" style="left:0;top:135.9px;width:140px;height:0.9px;background:#9c9c9c"></div>
<div class="t" style="left:14.2px;top:4.30px;font-size:8.6px;line-height:10px;height:10px;color:#262626;font-weight:500">空のグループ</div>
<div class="t" style="left:14.2px;top:24.60px;font-size:8.6px;line-height:10px;height:10px;color:#262626;font-weight:500">長方形</div>
<div class="t" style="left:14.2px;top:37.20px;font-size:8.6px;line-height:10px;height:10px;color:#262626;font-weight:500">楕円形</div>
<div class="t" style="left:14.2px;top:49.80px;font-size:8.6px;line-height:10px;height:10px;color:#262626;font-weight:500">多角形</div>
<div class="t" style="left:14.2px;top:62.20px;font-size:8.6px;line-height:10px;height:10px;color:#262626;font-weight:500">パス</div>
<div class="t" style="left:14.2px;top:83.60px;font-size:8.6px;line-height:10px;height:10px;color:#262626;font-weight:500">塗り</div>
<div class="t" style="left:14.2px;top:96.10px;font-size:8.6px;line-height:10px;height:10px;color:#262626;font-weight:500">線</div>
<div class="t" style="left:14.2px;top:108.60px;font-size:8.6px;line-height:10px;height:10px;color:#262626;font-weight:500">グラデーションの塗り</div>
<div class="t" style="left:14.2px;top:121.10px;font-size:8.6px;line-height:10px;height:10px;color:#262626;font-weight:500">グラデーションの線</div>
<div class="t" style="left:14.2px;top:142.00px;font-size:8.6px;line-height:10px;height:10px;color:#262626;font-weight:500">パスを結合</div>
<div class="t" style="left:14.2px;top:154.50px;font-size:8.6px;line-height:10px;height:10px;color:#262626;font-weight:500">パスのオフセット</div>
<div class="t" style="left:14.2px;top:167.00px;font-size:8.6px;line-height:10px;height:10px;color:#262626;font-weight:500">パンク・膨張</div>
<div class="t" style="left:14.2px;top:179.50px;font-size:8.6px;line-height:10px;height:10px;color:#262626;font-weight:500">リピーター</div>
<div class="t" style="left:14.2px;top:192.00px;font-size:8.6px;line-height:10px;height:10px;color:#262626;font-weight:500">角を丸くする</div>
<div class="t" style="left:14.2px;top:204.50px;font-size:8.6px;line-height:10px;height:10px;color:#262626;font-weight:500">パスのトリミング</div>
<div class="a" style="left:0;top:217px;width:140px;height:11.2px;background:#2463d1"></div>
<div class="t" style="left:14.2px;top:217.50px;font-size:8.6px;line-height:10px;height:10px;color:#ffffff;font-weight:500">旋回</div>
<div class="t" style="left:14.2px;top:230.50px;font-size:8.6px;line-height:10px;height:10px;color:#262626;font-weight:500">パスのウィグル</div>
<div class="t" style="left:14.2px;top:243.00px;font-size:8.6px;line-height:10px;height:10px;color:#262626;font-weight:500">トランスフォームのウィグル</div>
<div class="t" style="left:14.2px;top:255.50px;font-size:8.6px;line-height:10px;height:10px;color:#262626;font-weight:500">ジグザグ</div>
</div>
<div class="a" style="left:224px;top:506.6px;width:35px;height:27.8px;box-sizing:border-box;border:3.6px solid #9d4fcb"></div>
<div class="a" style="left:253.4px;top:534.6px;width:149px;height:28.6px;box-sizing:border-box;border:3.6px solid #9d4fcb"></div>
</div></body></html>
